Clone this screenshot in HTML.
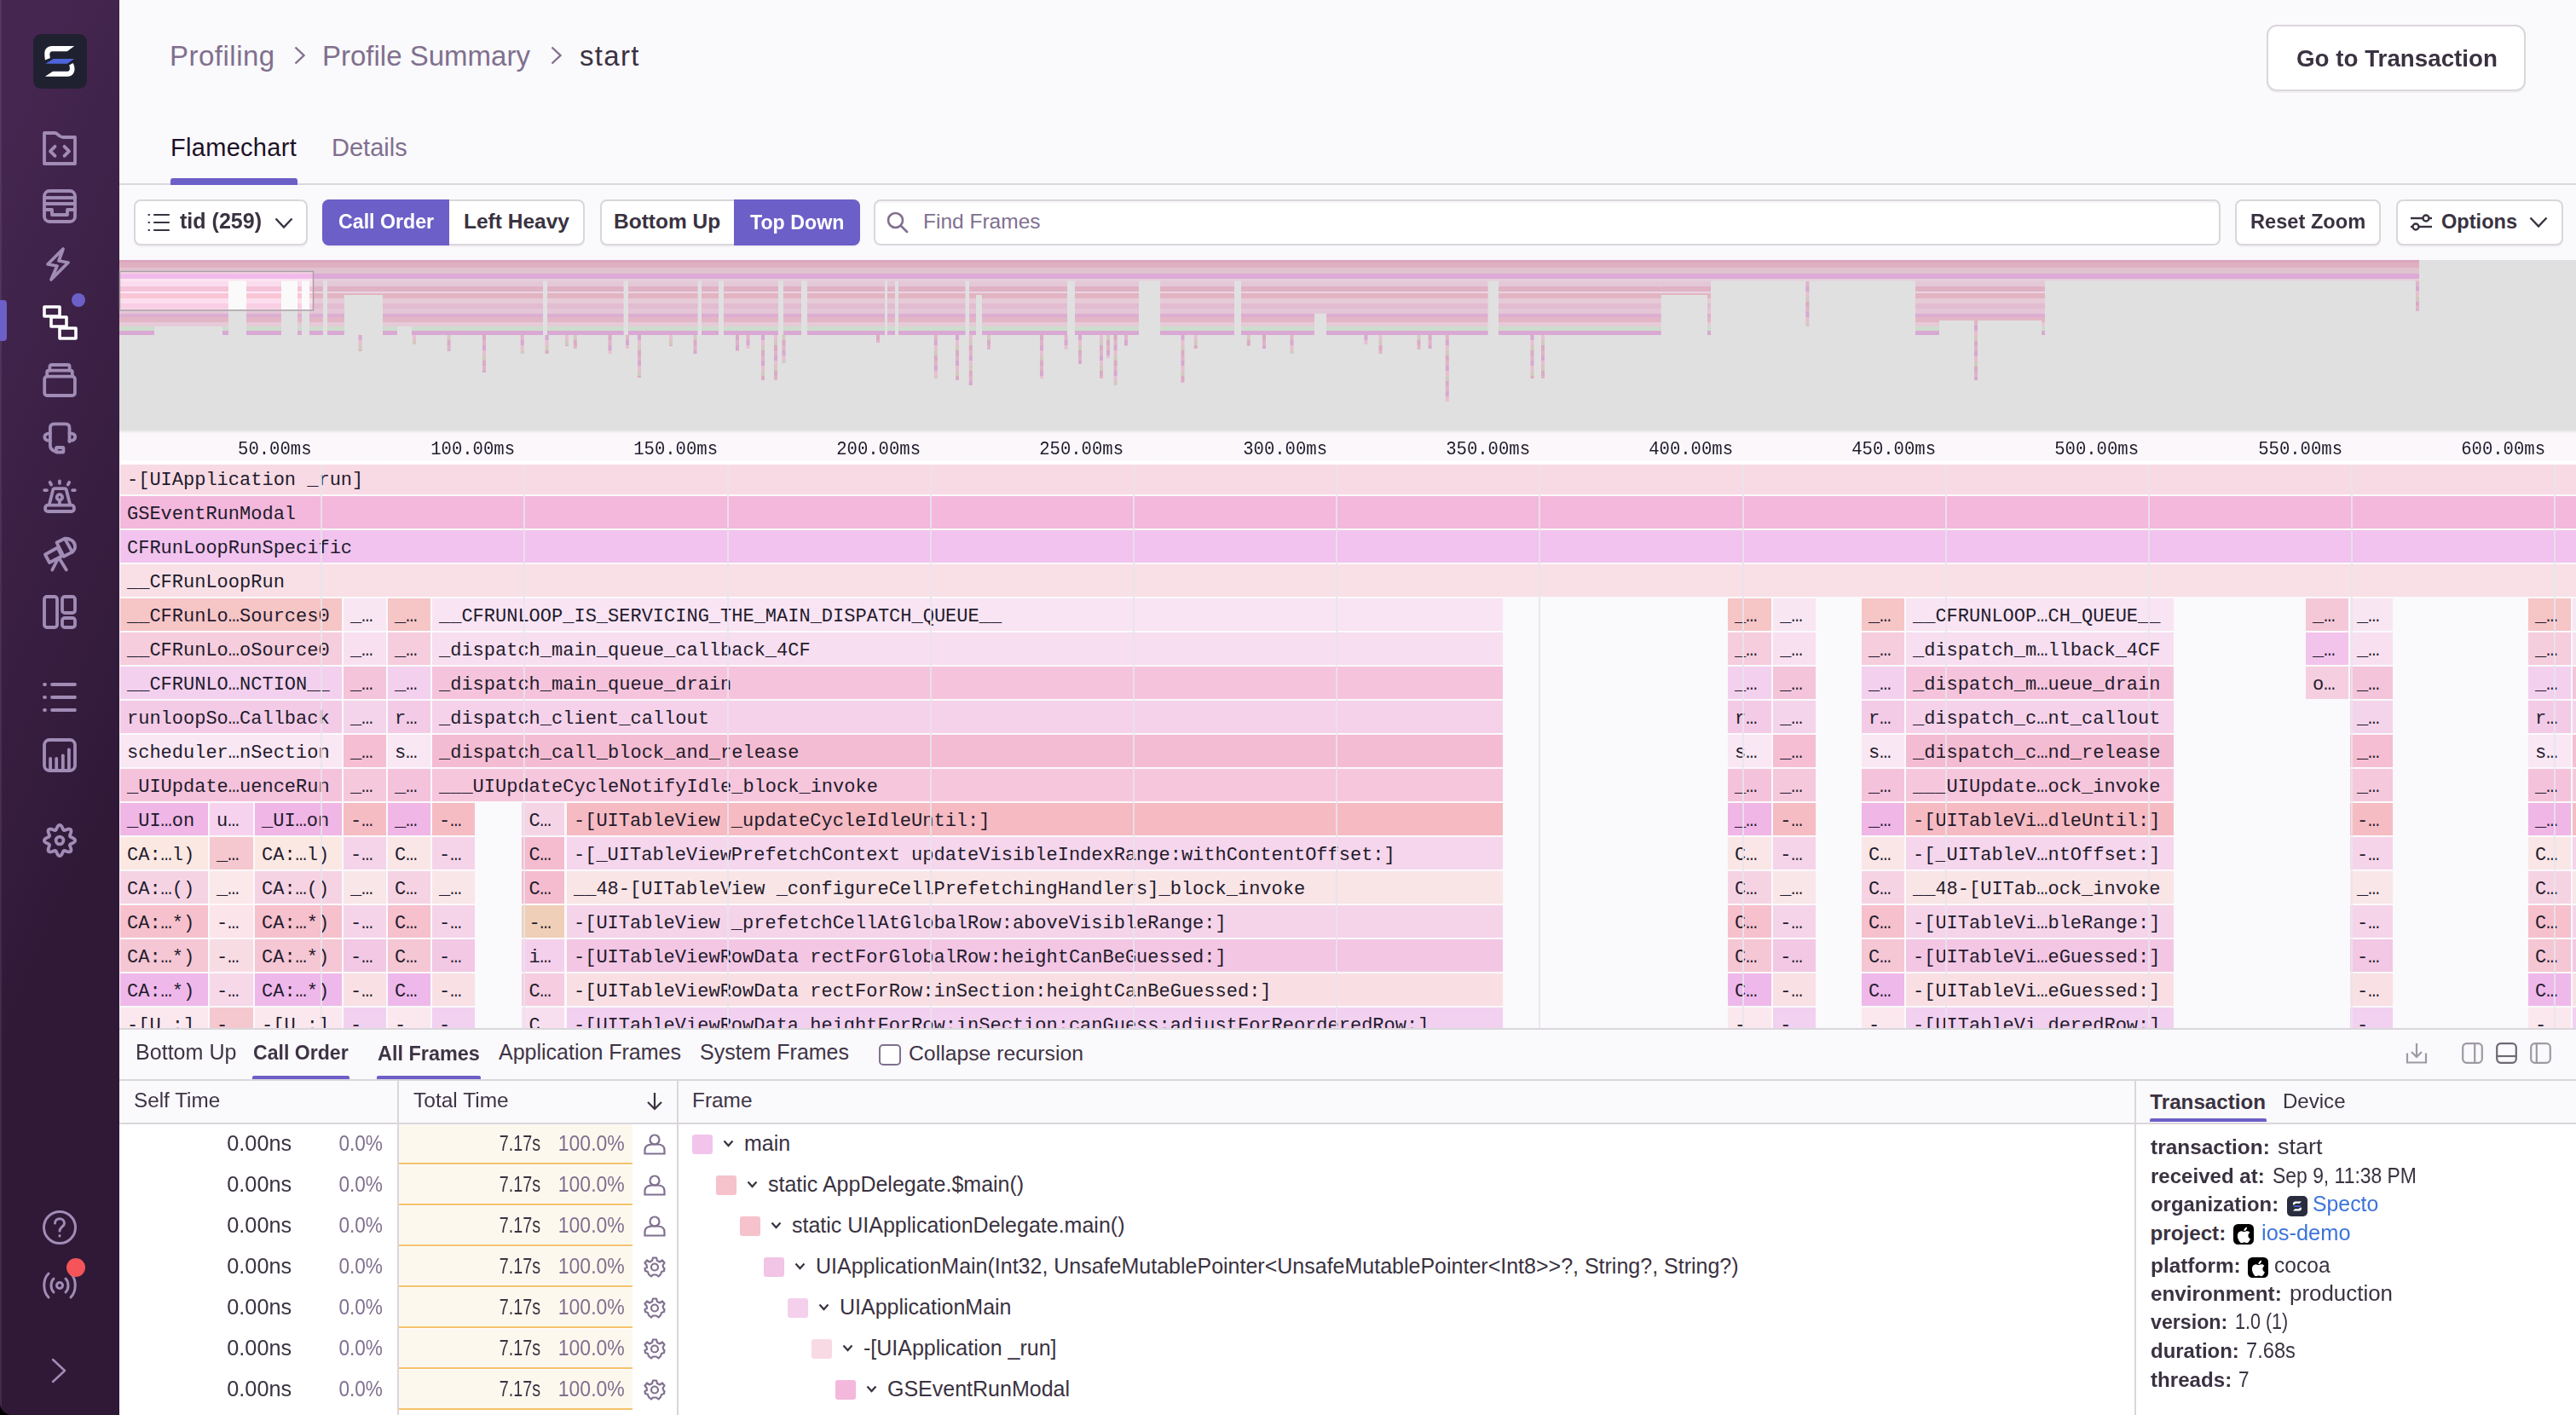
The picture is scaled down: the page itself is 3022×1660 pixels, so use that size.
<!DOCTYPE html><html><head><meta charset="utf-8"><style>
html,body{margin:0;padding:0;width:100%;height:100%;overflow:hidden;background:#faf9fb;}
body{position:relative;font-family:"Liberation Sans", sans-serif;}
.t{position:absolute;white-space:nowrap;line-height:1.1172;}
.m{position:absolute;white-space:nowrap;line-height:1.1328;font-family:"Liberation Mono", monospace;}
.b{position:absolute;box-sizing:border-box;}
svg{position:absolute;overflow:visible;}
#root{position:absolute;left:0;top:0;width:3022px;height:1660px;overflow:hidden;transform-origin:0 0;}
</style></head><body><div id="root">
<div class="b" style="left:0;top:0;width:140px;height:1660px;background:linear-gradient(294.17deg,#2f1937 35.57%,#452650 92.42%);"></div>
<div class="b" style="left:0;top:0;width:2px;height:1660px;background:rgba(255,255,255,0.08);"></div>
<div class="b" style="left:38.5px;top:40px;width:63.5px;height:64px;border-radius:9px;background:#1f2130;"></div>
<svg style="left:0;top:0" width="140" height="140" viewBox="0 0 140 140">
<path d="M87.2 54.1 L61 54.1 C55.5 54.1 52.3 58.2 52.3 62.5 C52.3 66 52.6 68.8 53 70.6 L58.9 68.1 C58.5 66.6 58.3 65 58.3 63.6 C58.3 61.6 59.5 60.2 61.3 60.2 L78.8 60.2 Z" fill="#fff"/>
<path d="M52.8 89.7 L79.3 89.7 C84.6 89.7 87.5 85.6 87.5 81 C87.5 77.5 86.6 75.5 85.4 73.9 L81.2 76.4 C81.7 77.6 81.9 79 81.9 80.2 C81.9 82.3 80.9 83.8 79.1 83.8 L62 83.8 Z" fill="#fff"/>
<path d="M53.3 74.7 L62.7 69.1 L87.2 69.1 L78.8 74.7 Z" fill="#4e64d8"/>
</svg>
<svg style="left:50px;top:154px" width="40" height="40" viewBox="0 0 40 40"><g fill="none" stroke="#a08cb5" stroke-width="3.8" stroke-linecap="round" stroke-linejoin="round"><path d="M2 2 L14.5 2 C16.5 2 17.5 4 20 5.5 C21.5 6.5 22.5 7 24 7 L38 7 L38 38 L2 38 Z"/><path d="M14.5 17.8 L9 23.3 L14.5 28.8"/><path d="M25.5 17.8 L31 23.3 L25.5 28.8"/></g></svg>
<svg style="left:50px;top:221.5px" width="40" height="40" viewBox="0 0 40 40"><g fill="none" stroke="#a08cb5" stroke-width="3.8" stroke-linecap="round" stroke-linejoin="round"><rect x="2" y="2" width="36" height="36" rx="6"/><path d="M2 10 L38 10"/><path d="M2 17 L38 17"/><path d="M2 24 L11 24 L11 30 L29 30 L29 24 L38 24"/></g></svg>
<svg style="left:50px;top:290px" width="40" height="40" viewBox="0 0 40 40"><g fill="none" stroke="#a08cb5" stroke-width="3.8" stroke-linecap="round" stroke-linejoin="round"><path d="M24 2 L6 20 L17 22 L10 38 L30 18 L19 16 Z"/></g></svg>
<svg style="left:50px;top:358px" width="41" height="41" viewBox="0 0 41 41"><g fill="none" stroke="#fff" stroke-width="3.6" stroke-linejoin="round"><rect x="2" y="2" width="18" height="11"/><rect x="10" y="14" width="18" height="11"/><rect x="20" y="27" width="19" height="12"/></g></svg>
<div class="b" style="left:84px;top:343.5px;width:16px;height:16px;border-radius:8px;background:#6c5fc7;"></div>
<div class="b" style="left:0;top:352px;width:8px;height:48px;border-radius:0 4px 4px 0;background:#6c5fc7;"></div>
<svg style="left:50px;top:426px" width="40" height="40" viewBox="0 0 40 40"><g fill="none" stroke="#a08cb5" stroke-width="3.8" stroke-linecap="round" stroke-linejoin="round"><rect x="2.2" y="15.6" width="35.7" height="22.4" rx="3"/><path d="M5.2 15.6 L5.2 10.5 C5.2 9.5 6 8.7 7 8.7 L33 8.7 C34 8.7 34.8 9.5 34.8 10.5 L34.8 15.6"/><path d="M8.4 8.7 L8.4 4 C8.4 2.9 9.3 2 10.4 2 L29.6 2 C30.7 2 31.6 2.9 31.6 4 L31.6 8.7"/></g></svg>
<svg style="left:50px;top:494px" width="40" height="40" viewBox="0 0 40 40"><g fill="none" stroke="#a08cb5" stroke-width="3.8" stroke-linecap="round" stroke-linejoin="round"><path d="M31.5 24 L31.5 8 C31.5 5 30 3.4 27 3.4 L13.5 3.4 C10.5 3.4 8.9 5 8.9 8 L8.9 29 C8.9 32 11 34 14.5 35.5"/><path d="M8.9 14.4 C4 14.4 2.3 16.5 2.3 18.7 C2.3 21 4 22.9 8.9 22.9"/><path d="M31.5 14.4 C36.5 14.4 38.2 16.5 38.2 18.7 C38.2 21 36.5 22.9 31.5 22.9"/><rect x="15.9" y="31" width="8.5" height="5.5" rx="1"/></g></svg>
<svg style="left:50px;top:562px" width="40" height="40" viewBox="0 0 40 40"><g fill="none" stroke="#a08cb5" stroke-width="3.8" stroke-linecap="round" stroke-linejoin="round"><path d="M7.8 30 L12.2 12.6 C12.5 11.6 13.3 11.1 14.3 11.1 L25.7 11.1 C26.7 11.1 27.5 11.6 27.8 12.6 L32.2 30"/><rect x="3.1" y="30.7" width="33.8" height="7.3" rx="3"/><circle cx="19.9" cy="21.4" r="3.2"/><path d="M19.9 24.6 L19.9 30"/><path d="M19.9 2.3 L19.9 4.9"/><path d="M8.6 3.8 L10.1 6.5"/><path d="M31.2 3.8 L29.7 6.5"/><path d="M2.2 13.1 L4.9 13.1"/><path d="M35.1 13.1 L37.8 13.1"/></g></svg>
<svg style="left:50px;top:630px" width="40" height="40" viewBox="0 0 40 40"><g fill="none" stroke="#a08cb5" stroke-width="3.8" stroke-linecap="round" stroke-linejoin="round"><path d="M3 20.5 L17.5 12.5 L22.5 22.5 L8 30 Z"/><path d="M16.5 6.5 L26 1.8 L34.8 17.6 L24.8 22.8 Z"/><path d="M26 1.8 C31 1.5 37.5 4.5 38 10 C38.3 13 37 16 34.8 17.6"/><path d="M17.5 26.5 L11.3 38.5"/><path d="M19.8 25.5 L27.8 38.5"/></g></svg>
<svg style="left:50px;top:698px" width="40" height="40" viewBox="0 0 40 40"><g fill="none" stroke="#a08cb5" stroke-width="3.8" stroke-linecap="round" stroke-linejoin="round"><rect x="2" y="2" width="15" height="36" rx="3"/><rect x="23" y="2" width="15" height="19" rx="3"/><rect x="23" y="27" width="15" height="11" rx="3"/></g></svg>
<svg style="left:50px;top:800px" width="40" height="40" viewBox="0 0 40 40"><g fill="none" stroke="#a08cb5" stroke-width="3.8" stroke-linecap="round" stroke-linejoin="round"><path d="M11 3 L38 3"/><path d="M11 18 L38 18"/><path d="M11 33 L38 33"/><path d="M2 3 L3 3"/><path d="M2 18 L3 18"/><path d="M2 33 L3 33"/></g></svg>
<svg style="left:50px;top:866px" width="40" height="40" viewBox="0 0 40 40"><g fill="none" stroke="#a08cb5" stroke-width="3.8" stroke-linecap="round" stroke-linejoin="round"><rect x="2" y="2" width="36" height="36" rx="6"/><path d="M9.1 37 L9.1 24"/><path d="M16.2 37 L16.2 24"/><path d="M23.8 37 L23.8 20.3"/><path d="M30.9 37 L30.9 13.3"/></g></svg>
<svg style="left:50px;top:966px" width="40" height="40" viewBox="0 0 40 40"><g fill="none" stroke="#a08cb5" stroke-width="3.8" stroke-linecap="round" stroke-linejoin="round"><circle cx="20" cy="20" r="4.4"/><path d="M38.20 20.00 L37.81 21.17 L36.76 22.21 L35.30 23.04 L33.81 23.70 L32.64 24.29 L32.01 24.97 L31.97 25.90 L32.38 27.15 L32.97 28.67 L33.41 30.29 L33.42 31.77 L32.87 32.87 L31.77 33.42 L30.29 33.41 L28.67 32.97 L27.15 32.38 L25.90 31.97 L24.97 32.01 L24.29 32.64 L23.70 33.81 L23.04 35.30 L22.21 36.76 L21.17 37.81 L20.00 38.20 L18.83 37.81 L17.79 36.76 L16.96 35.30 L16.30 33.81 L15.71 32.64 L15.03 32.01 L14.10 31.97 L12.85 32.38 L11.33 32.97 L9.71 33.41 L8.23 33.42 L7.13 32.87 L6.58 31.77 L6.59 30.29 L7.03 28.67 L7.62 27.15 L8.03 25.90 L7.99 24.97 L7.36 24.29 L6.19 23.70 L4.70 23.04 L3.24 22.21 L2.19 21.17 L1.80 20.00 L2.19 18.83 L3.24 17.79 L4.70 16.96 L6.19 16.30 L7.36 15.71 L7.99 15.03 L8.03 14.10 L7.62 12.85 L7.03 11.33 L6.59 9.71 L6.58 8.23 L7.13 7.13 L8.23 6.58 L9.71 6.59 L11.33 7.03 L12.85 7.62 L14.10 8.03 L15.03 7.99 L15.71 7.36 L16.30 6.19 L16.96 4.70 L17.79 3.24 L18.83 2.19 L20.00 1.80 L21.17 2.19 L22.21 3.24 L23.04 4.70 L23.70 6.19 L24.29 7.36 L24.97 7.99 L25.90 8.03 L27.15 7.62 L28.67 7.03 L30.29 6.59 L31.77 6.58 L32.87 7.13 L33.42 8.23 L33.41 9.71 L32.97 11.33 L32.38 12.85 L31.97 14.10 L32.01 15.03 L32.64 15.71 L33.81 16.30 L35.30 16.96 L36.76 17.79 L37.81 18.83 L38.20 20.00 Z"/></g></svg>
<svg style="left:50px;top:1420px" width="40" height="40" viewBox="0 0 40 40"><g fill="none" stroke="#a08cb5" stroke-width="3" stroke-linecap="round" stroke-linejoin="round"><circle cx="20" cy="20" r="18.5"/><path d="M14.5 15 C14.5 8 25.5 8 25.5 15 C25.5 19 20 19.5 20 24"/><path d="M20 29.5 L20 30"/></g></svg>
<svg style="left:50px;top:1488px" width="40" height="40" viewBox="0 0 40 40"><g fill="none" stroke="#a08cb5" stroke-width="3" stroke-linecap="round" stroke-linejoin="round"><circle cx="20" cy="20" r="3.5"/><path d="M13 12 C9 16 9 24 13 28"/><path d="M27 12 C31 16 31 24 27 28"/><path d="M7 6 C0 13 0 27 7 34"/><path d="M33 6 C40 13 40 27 33 34"/></g></svg>
<div class="b" style="left:78px;top:1476px;width:22px;height:22px;border-radius:11px;background:#f55459;"></div>
<svg style="left:50px;top:1588px" width="40" height="40" viewBox="0 0 40 40"><g fill="none" stroke="#a08cb5" stroke-width="2.5" stroke-linecap="round" stroke-linejoin="round"><path d="M-8 -13 L6 0 L-8 13" transform="translate(20,20)"/></g></svg>
<div class="b" style="left:0;top:1646px;width:14px;height:14px;background:radial-gradient(circle at 14px 0px, transparent 13.5px, #000 14.5px);"></div>
<div class="b" style="left:3008px;top:1646px;width:14px;height:14px;background:radial-gradient(circle at 0px 0px, transparent 13.5px, #000 14.5px);"></div>
<div class="t" style="left:199px;top:47.8px;font-size:33px;color:#80708f;font-weight:400;letter-spacing:0.5px;">Profiling</div>
<svg style="left:345px;top:54px" width="13" height="22" viewBox="0 0 13 22"><path d="M1.5 1.5 L11.5 11 L1.5 20.5" fill="none" stroke="#80708f" stroke-width="2.4"/></svg>
<div class="t" style="left:378px;top:47.8px;font-size:33px;color:#80708f;font-weight:400;">Profile Summary</div>
<svg style="left:646px;top:54px" width="13" height="22" viewBox="0 0 13 22"><path d="M1.5 1.5 L11.5 11 L1.5 20.5" fill="none" stroke="#80708f" stroke-width="2.4"/></svg>
<div class="t" style="left:680px;top:47.8px;font-size:33px;color:#3a3241;font-weight:400;letter-spacing:1.3px;">start</div>
<div class="b" style="left:2659px;top:29px;width:304px;height:78px;border:2px solid #dad6dc;border-radius:12px;background:#fff;box-shadow:0 2px 0 rgba(43,34,51,0.04);"></div>
<div class="t" style="left:2693.5px;top:53.0px;font-size:28px;color:#3a3241;font-weight:700;transform:scaleX(0.9912);transform-origin:0 50%;">Go to Transaction</div>
<div class="t" style="left:200px;top:156.7px;font-size:29px;color:#1d1127;font-weight:400;letter-spacing:0.3px;">Flamechart</div>
<div class="t" style="left:389px;top:156.7px;font-size:29px;color:#80708f;font-weight:400;">Details</div>
<div class="b" style="left:140px;top:215px;width:2882px;height:2px;background:#dad6dc;"></div>
<div class="b" style="left:200px;top:209px;width:149px;height:8px;background:#6c5fc7;border-radius:3px 3px 0 0;"></div>
<div class="b" style="left:157px;top:233.5px;width:204px;height:54.5px;background:#fff;border:2px solid #dad6dc;border-radius:8px;box-shadow:0 2px 0 rgba(43,34,51,0.04);"></div>
<svg style="left:173px;top:249px" width="26" height="24" viewBox="0 0 26 24"><g stroke="#3a3241" stroke-width="2.2" fill="none" stroke-linecap="round"><path d="M8 3 L25 3"/><path d="M8 12 L25 12"/><path d="M8 21 L25 21"/><path d="M1.5 3 L2 3"/><path d="M1.5 12 L2 12"/><path d="M1.5 21 L2 21"/></g></svg>
<div class="t" style="left:211px;top:245.8px;font-size:25px;color:#3a3241;font-weight:700;transform:scaleX(1.0026);transform-origin:0 50%;">tid (259)</div>
<svg style="left:322px;top:255px" width="22" height="14" viewBox="0 0 22 14"><path d="M1.5 1.5 L11 11.5 L20.5 1.5" fill="none" stroke="#3a3241" stroke-width="2.4"/></svg>
<div class="b" style="left:378px;top:233.5px;width:308px;height:54.5px;background:#fff;border:2px solid #dad6dc;border-radius:8px;box-shadow:0 2px 0 rgba(43,34,51,0.04);"></div>
<div class="b" style="left:378px;top:233.5px;width:149px;height:54.5px;background:#6c5fc7;border-radius:8px 0 0 8px;"></div>
<div class="t" style="left:396.7px;top:246.7px;font-size:24px;color:#fff;font-weight:700;transform:scaleX(0.9664);transform-origin:0 50%;">Call Order</div>
<div class="t" style="left:544px;top:246.2px;font-size:24.5px;color:#3a3241;font-weight:700;transform:scaleX(1.0000);transform-origin:0 50%;">Left Heavy</div>
<div class="b" style="left:704px;top:233.5px;width:305px;height:54.5px;background:#fff;border:2px solid #dad6dc;border-radius:8px;box-shadow:0 2px 0 rgba(43,34,51,0.04);"></div>
<div class="b" style="left:861px;top:233.5px;width:148px;height:54.5px;background:#6c5fc7;border-radius:0 8px 8px 0;"></div>
<div class="t" style="left:720px;top:246.2px;font-size:24.5px;color:#3a3241;font-weight:700;">Bottom Up</div>
<div class="t" style="left:879.8px;top:246.5px;font-size:24.2px;color:#fff;font-weight:700;transform:scaleX(0.9593);transform-origin:0 50%;">Top Down</div>
<div class="b" style="left:1025px;top:233.5px;width:1580px;height:54.5px;background:#fff;border:2px solid #dad6dc;border-radius:8px;box-shadow:inset 0 2px 1px rgba(43,34,51,0.04);"></div>
<svg style="left:1040px;top:248px" width="26" height="26" viewBox="0 0 26 26"><g stroke="#80708f" stroke-width="2.6" fill="none" stroke-linecap="round"><circle cx="10.5" cy="10.5" r="8.5"/><path d="M17 17 L24 24"/></g></svg>
<div class="t" style="left:1083px;top:246.2px;font-size:24.5px;color:#80708f;font-weight:400;">Find Frames</div>
<div class="b" style="left:2622px;top:233.5px;width:171px;height:54.5px;background:#fff;border:2px solid #dad6dc;border-radius:8px;box-shadow:0 2px 0 rgba(43,34,51,0.04);"></div>
<div class="t" style="left:2640px;top:246.9px;font-size:23.8px;color:#3a3241;font-weight:700;transform:scaleX(0.9926);transform-origin:0 50%;">Reset Zoom</div>
<div class="b" style="left:2811px;top:233.5px;width:196px;height:54.5px;background:#fff;border:2px solid #dad6dc;border-radius:8px;box-shadow:0 2px 0 rgba(43,34,51,0.04);"></div>
<svg style="left:2827px;top:250px" width="27" height="22" viewBox="0 0 27 22"><g stroke="#3a3241" stroke-width="2.4" fill="none"><path d="M1 6 L15 6"/><circle cx="19" cy="6" r="3.5"/><path d="M22.5 6 L26 6"/><path d="M11 16 L26 16"/><circle cx="7" cy="16" r="3.5"/><path d="M1 16 L3.5 16"/></g></svg>
<div class="t" style="left:2864px;top:247.0px;font-size:23.6px;color:#3a3241;font-weight:700;">Options</div>
<svg style="left:2967px;top:254px" width="22" height="14" viewBox="0 0 22 14"><path d="M1.5 1.5 L11 11.5 L20.5 1.5" fill="none" stroke="#3a3241" stroke-width="2.4"/></svg>
<svg style="left:0;top:0" width="3022" height="1660" viewBox="0 0 3022 1660"><rect x="140" y="305" width="2882" height="200.5" fill="#e0e0e0"/><rect x="140" y="305" width="2698" height="3" fill="#dca6c0"/><rect x="140" y="308" width="2698" height="6" fill="#dfb0c0"/><rect x="140" y="314" width="2698" height="7" fill="#e1c2cf"/><rect x="140" y="321" width="2698" height="6" fill="#dcaad6"/><rect x="140" y="327" width="2698" height="2.5" fill="#e4cfdb"/><rect x="140" y="329.5" width="41" height="6.5" fill="#e4c8d8"/><rect x="140" y="336" width="41" height="6" fill="#dfb2c4"/><rect x="140" y="342" width="41" height="2" fill="#ead4e2"/><rect x="140" y="344" width="41" height="6" fill="#e2b4c2"/><rect x="140" y="350" width="41" height="6" fill="#e6cad8"/><rect x="140" y="356" width="41" height="6" fill="#e2bcd0"/><rect x="140" y="362" width="41" height="6" fill="#e4c6d6"/><rect x="140" y="368" width="41" height="4" fill="#dcaed2"/><rect x="140" y="372" width="41" height="6" fill="#e2b6c6"/><rect x="140" y="378" width="41" height="5" fill="#e6cad8"/><rect x="140" y="383" width="41" height="5" fill="#cddccc"/><rect x="140" y="388" width="41" height="5" fill="#daa8d4"/><rect x="181" y="329.5" width="80" height="6.5" fill="#e4c8d8"/><rect x="181" y="336" width="80" height="6" fill="#dfb2c4"/><rect x="181" y="342" width="80" height="2" fill="#ead4e2"/><rect x="181" y="344" width="80" height="6" fill="#e2b4c2"/><rect x="181" y="350" width="80" height="6" fill="#e6cad8"/><rect x="181" y="356" width="80" height="6" fill="#e2bcd0"/><rect x="181" y="362" width="80" height="6" fill="#e4c6d6"/><rect x="181" y="368" width="80" height="4" fill="#dcaed2"/><rect x="181" y="372" width="80" height="6" fill="#e2b6c6"/><rect x="181" y="378" width="80" height="5" fill="#e6cad8"/><rect x="261" y="329.5" width="7" height="6.5" fill="#e4c8d8"/><rect x="261" y="336" width="7" height="6" fill="#dfb2c4"/><rect x="261" y="342" width="7" height="2" fill="#ead4e2"/><rect x="261" y="344" width="7" height="6" fill="#e2b4c2"/><rect x="261" y="350" width="7" height="6" fill="#e6cad8"/><rect x="261" y="356" width="7" height="6" fill="#e2bcd0"/><rect x="261" y="362" width="7" height="6" fill="#e4c6d6"/><rect x="261" y="368" width="7" height="4" fill="#dcaed2"/><rect x="261" y="372" width="7" height="6" fill="#e2b6c6"/><rect x="261" y="378" width="7" height="5" fill="#e6cad8"/><rect x="261" y="383" width="7" height="5" fill="#cddccc"/><rect x="261" y="388" width="7" height="5" fill="#daa8d4"/><rect x="289" y="329.5" width="41" height="6.5" fill="#e4c8d8"/><rect x="289" y="336" width="41" height="6" fill="#dfb2c4"/><rect x="289" y="342" width="41" height="2" fill="#ead4e2"/><rect x="289" y="344" width="41" height="6" fill="#e2b4c2"/><rect x="289" y="350" width="41" height="6" fill="#e6cad8"/><rect x="289" y="356" width="41" height="6" fill="#e2bcd0"/><rect x="289" y="362" width="41" height="6" fill="#e4c6d6"/><rect x="289" y="368" width="41" height="4" fill="#dcaed2"/><rect x="289" y="372" width="41" height="6" fill="#e2b6c6"/><rect x="289" y="378" width="41" height="5" fill="#e6cad8"/><rect x="289" y="383" width="41" height="5" fill="#cddccc"/><rect x="289" y="388" width="41" height="5" fill="#daa8d4"/><rect x="349" y="329.5" width="5" height="6.5" fill="#e4c8d8"/><rect x="349" y="336" width="5" height="6" fill="#dfb2c4"/><rect x="349" y="342" width="5" height="2" fill="#ead4e2"/><rect x="349" y="344" width="5" height="6" fill="#e2b4c2"/><rect x="349" y="350" width="5" height="6" fill="#e6cad8"/><rect x="349" y="356" width="5" height="6" fill="#e2bcd0"/><rect x="349" y="362" width="5" height="6" fill="#e4c6d6"/><rect x="349" y="368" width="5" height="4" fill="#dcaed2"/><rect x="349" y="372" width="5" height="6" fill="#e2b6c6"/><rect x="349" y="378" width="5" height="5" fill="#e6cad8"/><rect x="349" y="383" width="5" height="5" fill="#cddccc"/><rect x="349" y="388" width="5" height="5" fill="#daa8d4"/><rect x="363" y="329.5" width="16" height="6.5" fill="#e4c8d8"/><rect x="363" y="336" width="16" height="6" fill="#dfb2c4"/><rect x="363" y="342" width="16" height="2" fill="#ead4e2"/><rect x="363" y="344" width="16" height="6" fill="#e2b4c2"/><rect x="363" y="350" width="16" height="6" fill="#e6cad8"/><rect x="363" y="356" width="16" height="6" fill="#e2bcd0"/><rect x="363" y="362" width="16" height="6" fill="#e4c6d6"/><rect x="363" y="368" width="16" height="4" fill="#dcaed2"/><rect x="363" y="372" width="16" height="6" fill="#e2b6c6"/><rect x="363" y="378" width="16" height="5" fill="#e6cad8"/><rect x="363" y="383" width="16" height="5" fill="#cddccc"/><rect x="363" y="388" width="16" height="5" fill="#daa8d4"/><rect x="384" y="329.5" width="20" height="6.5" fill="#e4c8d8"/><rect x="384" y="336" width="20" height="6" fill="#dfb2c4"/><rect x="384" y="342" width="20" height="2" fill="#ead4e2"/><rect x="384" y="344" width="20" height="6" fill="#e2b4c2"/><rect x="384" y="350" width="20" height="6" fill="#e6cad8"/><rect x="384" y="356" width="20" height="6" fill="#e2bcd0"/><rect x="384" y="362" width="20" height="6" fill="#e4c6d6"/><rect x="384" y="368" width="20" height="4" fill="#dcaed2"/><rect x="384" y="372" width="20" height="6" fill="#e2b6c6"/><rect x="384" y="378" width="20" height="5" fill="#e6cad8"/><rect x="384" y="383" width="20" height="5" fill="#cddccc"/><rect x="384" y="388" width="20" height="5" fill="#daa8d4"/><rect x="404" y="329.5" width="45" height="6.5" fill="#e4c8d8"/><rect x="404" y="336" width="45" height="6" fill="#dfb2c4"/><rect x="404" y="342" width="45" height="2" fill="#ead4e2"/><rect x="404" y="344" width="45" height="2" fill="#e2b4c2"/><rect x="449" y="329.5" width="17" height="6.5" fill="#e4c8d8"/><rect x="449" y="336" width="17" height="6" fill="#dfb2c4"/><rect x="449" y="342" width="17" height="2" fill="#ead4e2"/><rect x="449" y="344" width="17" height="6" fill="#e2b4c2"/><rect x="449" y="350" width="17" height="6" fill="#e6cad8"/><rect x="449" y="356" width="17" height="6" fill="#e2bcd0"/><rect x="449" y="362" width="17" height="6" fill="#e4c6d6"/><rect x="449" y="368" width="17" height="4" fill="#dcaed2"/><rect x="449" y="372" width="17" height="6" fill="#e2b6c6"/><rect x="449" y="378" width="17" height="5" fill="#e6cad8"/><rect x="449" y="383" width="17" height="5" fill="#cddccc"/><rect x="449" y="388" width="17" height="5" fill="#daa8d4"/><rect x="466" y="329.5" width="17" height="6.5" fill="#e4c8d8"/><rect x="466" y="336" width="17" height="6" fill="#dfb2c4"/><rect x="466" y="342" width="17" height="2" fill="#ead4e2"/><rect x="466" y="344" width="17" height="6" fill="#e2b4c2"/><rect x="466" y="350" width="17" height="6" fill="#e6cad8"/><rect x="466" y="356" width="17" height="6" fill="#e2bcd0"/><rect x="466" y="362" width="17" height="6" fill="#e4c6d6"/><rect x="466" y="368" width="17" height="4" fill="#dcaed2"/><rect x="466" y="372" width="17" height="6" fill="#e2b6c6"/><rect x="466" y="378" width="17" height="5" fill="#e6cad8"/><rect x="483" y="329.5" width="154" height="6.5" fill="#e4c8d8"/><rect x="483" y="336" width="154" height="6" fill="#dfb2c4"/><rect x="483" y="342" width="154" height="2" fill="#ead4e2"/><rect x="483" y="344" width="154" height="6" fill="#e2b4c2"/><rect x="483" y="350" width="154" height="6" fill="#e6cad8"/><rect x="483" y="356" width="154" height="6" fill="#e2bcd0"/><rect x="483" y="362" width="154" height="6" fill="#e4c6d6"/><rect x="483" y="368" width="154" height="4" fill="#dcaed2"/><rect x="483" y="372" width="154" height="6" fill="#e2b6c6"/><rect x="483" y="378" width="154" height="5" fill="#e6cad8"/><rect x="483" y="383" width="154" height="5" fill="#cddccc"/><rect x="483" y="388" width="154" height="5" fill="#daa8d4"/><rect x="642" y="329.5" width="89.60000000000002" height="6.5" fill="#e4c8d8"/><rect x="642" y="336" width="89.60000000000002" height="6" fill="#dfb2c4"/><rect x="642" y="342" width="89.60000000000002" height="2" fill="#ead4e2"/><rect x="642" y="344" width="89.60000000000002" height="6" fill="#e2b4c2"/><rect x="642" y="350" width="89.60000000000002" height="6" fill="#e6cad8"/><rect x="642" y="356" width="89.60000000000002" height="6" fill="#e2bcd0"/><rect x="642" y="362" width="89.60000000000002" height="6" fill="#e4c6d6"/><rect x="642" y="368" width="89.60000000000002" height="4" fill="#dcaed2"/><rect x="642" y="372" width="89.60000000000002" height="6" fill="#e2b6c6"/><rect x="642" y="378" width="89.60000000000002" height="5" fill="#e6cad8"/><rect x="642" y="383" width="89.60000000000002" height="5" fill="#cddccc"/><rect x="642" y="388" width="89.60000000000002" height="5" fill="#daa8d4"/><rect x="737" y="329.5" width="81.60000000000002" height="6.5" fill="#e4c8d8"/><rect x="737" y="336" width="81.60000000000002" height="6" fill="#dfb2c4"/><rect x="737" y="342" width="81.60000000000002" height="2" fill="#ead4e2"/><rect x="737" y="344" width="81.60000000000002" height="6" fill="#e2b4c2"/><rect x="737" y="350" width="81.60000000000002" height="6" fill="#e6cad8"/><rect x="737" y="356" width="81.60000000000002" height="6" fill="#e2bcd0"/><rect x="737" y="362" width="81.60000000000002" height="6" fill="#e4c6d6"/><rect x="737" y="368" width="81.60000000000002" height="4" fill="#dcaed2"/><rect x="737" y="372" width="81.60000000000002" height="6" fill="#e2b6c6"/><rect x="737" y="378" width="81.60000000000002" height="5" fill="#e6cad8"/><rect x="737" y="383" width="81.60000000000002" height="5" fill="#cddccc"/><rect x="737" y="388" width="81.60000000000002" height="5" fill="#daa8d4"/><rect x="823" y="329.5" width="20" height="6.5" fill="#e4c8d8"/><rect x="823" y="336" width="20" height="6" fill="#dfb2c4"/><rect x="823" y="342" width="20" height="2" fill="#ead4e2"/><rect x="823" y="344" width="20" height="6" fill="#e2b4c2"/><rect x="823" y="350" width="20" height="6" fill="#e6cad8"/><rect x="823" y="356" width="20" height="6" fill="#e2bcd0"/><rect x="823" y="362" width="20" height="6" fill="#e4c6d6"/><rect x="823" y="368" width="20" height="4" fill="#dcaed2"/><rect x="823" y="372" width="20" height="6" fill="#e2b6c6"/><rect x="823" y="378" width="20" height="5" fill="#e6cad8"/><rect x="823" y="383" width="20" height="5" fill="#cddccc"/><rect x="823" y="388" width="20" height="5" fill="#daa8d4"/><rect x="849" y="329.5" width="64" height="6.5" fill="#e4c8d8"/><rect x="849" y="336" width="64" height="6" fill="#dfb2c4"/><rect x="849" y="342" width="64" height="2" fill="#ead4e2"/><rect x="849" y="344" width="64" height="6" fill="#e2b4c2"/><rect x="849" y="350" width="64" height="6" fill="#e6cad8"/><rect x="849" y="356" width="64" height="6" fill="#e2bcd0"/><rect x="849" y="362" width="64" height="6" fill="#e4c6d6"/><rect x="849" y="368" width="64" height="4" fill="#dcaed2"/><rect x="849" y="372" width="64" height="6" fill="#e2b6c6"/><rect x="849" y="378" width="64" height="5" fill="#e6cad8"/><rect x="849" y="383" width="64" height="5" fill="#cddccc"/><rect x="849" y="388" width="64" height="5" fill="#daa8d4"/><rect x="919" y="329.5" width="21" height="6.5" fill="#e4c8d8"/><rect x="919" y="336" width="21" height="6" fill="#dfb2c4"/><rect x="919" y="342" width="21" height="2" fill="#ead4e2"/><rect x="919" y="344" width="21" height="6" fill="#e2b4c2"/><rect x="919" y="350" width="21" height="6" fill="#e6cad8"/><rect x="919" y="356" width="21" height="6" fill="#e2bcd0"/><rect x="919" y="362" width="21" height="6" fill="#e4c6d6"/><rect x="919" y="368" width="21" height="4" fill="#dcaed2"/><rect x="919" y="372" width="21" height="6" fill="#e2b6c6"/><rect x="919" y="378" width="21" height="5" fill="#e6cad8"/><rect x="919" y="383" width="21" height="5" fill="#cddccc"/><rect x="919" y="388" width="21" height="5" fill="#daa8d4"/><rect x="947" y="329.5" width="91" height="6.5" fill="#e4c8d8"/><rect x="947" y="336" width="91" height="6" fill="#dfb2c4"/><rect x="947" y="342" width="91" height="2" fill="#ead4e2"/><rect x="947" y="344" width="91" height="6" fill="#e2b4c2"/><rect x="947" y="350" width="91" height="6" fill="#e6cad8"/><rect x="947" y="356" width="91" height="6" fill="#e2bcd0"/><rect x="947" y="362" width="91" height="6" fill="#e4c6d6"/><rect x="947" y="368" width="91" height="4" fill="#dcaed2"/><rect x="947" y="372" width="91" height="6" fill="#e2b6c6"/><rect x="947" y="378" width="91" height="5" fill="#e6cad8"/><rect x="947" y="383" width="91" height="5" fill="#cddccc"/><rect x="947" y="388" width="91" height="5" fill="#daa8d4"/><rect x="1041" y="329.5" width="9" height="6.5" fill="#e4c8d8"/><rect x="1041" y="336" width="9" height="6" fill="#dfb2c4"/><rect x="1041" y="342" width="9" height="2" fill="#ead4e2"/><rect x="1041" y="344" width="9" height="6" fill="#e2b4c2"/><rect x="1041" y="350" width="9" height="6" fill="#e6cad8"/><rect x="1041" y="356" width="9" height="6" fill="#e2bcd0"/><rect x="1041" y="362" width="9" height="6" fill="#e4c6d6"/><rect x="1041" y="368" width="9" height="4" fill="#dcaed2"/><rect x="1041" y="372" width="9" height="6" fill="#e2b6c6"/><rect x="1041" y="378" width="9" height="5" fill="#e6cad8"/><rect x="1041" y="383" width="9" height="5" fill="#cddccc"/><rect x="1041" y="388" width="9" height="5" fill="#daa8d4"/><rect x="1054" y="329.5" width="78.5" height="6.5" fill="#e4c8d8"/><rect x="1054" y="336" width="78.5" height="6" fill="#dfb2c4"/><rect x="1054" y="342" width="78.5" height="2" fill="#ead4e2"/><rect x="1054" y="344" width="78.5" height="6" fill="#e2b4c2"/><rect x="1054" y="350" width="78.5" height="6" fill="#e6cad8"/><rect x="1054" y="356" width="78.5" height="6" fill="#e2bcd0"/><rect x="1054" y="362" width="78.5" height="6" fill="#e4c6d6"/><rect x="1054" y="368" width="78.5" height="4" fill="#dcaed2"/><rect x="1054" y="372" width="78.5" height="6" fill="#e2b6c6"/><rect x="1054" y="378" width="78.5" height="5" fill="#e6cad8"/><rect x="1054" y="383" width="78.5" height="5" fill="#cddccc"/><rect x="1054" y="388" width="78.5" height="5" fill="#daa8d4"/><rect x="1137" y="329.5" width="8" height="6.5" fill="#e4c8d8"/><rect x="1137" y="336" width="8" height="6" fill="#dfb2c4"/><rect x="1137" y="342" width="8" height="2" fill="#ead4e2"/><rect x="1137" y="344" width="8" height="6" fill="#e2b4c2"/><rect x="1137" y="350" width="8" height="6" fill="#e6cad8"/><rect x="1137" y="356" width="8" height="6" fill="#e2bcd0"/><rect x="1137" y="362" width="8" height="6" fill="#e4c6d6"/><rect x="1137" y="368" width="8" height="4" fill="#dcaed2"/><rect x="1137" y="372" width="8" height="6" fill="#e2b6c6"/><rect x="1137" y="378" width="8" height="5" fill="#e6cad8"/><rect x="1137" y="383" width="8" height="5" fill="#cddccc"/><rect x="1137" y="388" width="8" height="5" fill="#daa8d4"/><rect x="1145" y="329.5" width="7" height="6.5" fill="#e4c8d8"/><rect x="1145" y="336" width="7" height="6" fill="#dfb2c4"/><rect x="1145" y="342" width="7" height="2" fill="#ead4e2"/><rect x="1145" y="344" width="7" height="2" fill="#e2b4c2"/><rect x="1152" y="329.5" width="100" height="6.5" fill="#e4c8d8"/><rect x="1152" y="336" width="100" height="6" fill="#dfb2c4"/><rect x="1152" y="342" width="100" height="2" fill="#ead4e2"/><rect x="1152" y="344" width="100" height="6" fill="#e2b4c2"/><rect x="1152" y="350" width="100" height="6" fill="#e6cad8"/><rect x="1152" y="356" width="100" height="6" fill="#e2bcd0"/><rect x="1152" y="362" width="100" height="6" fill="#e4c6d6"/><rect x="1152" y="368" width="100" height="4" fill="#dcaed2"/><rect x="1152" y="372" width="100" height="6" fill="#e2b6c6"/><rect x="1152" y="378" width="100" height="5" fill="#e6cad8"/><rect x="1152" y="383" width="100" height="5" fill="#cddccc"/><rect x="1152" y="388" width="100" height="5" fill="#daa8d4"/><rect x="1261" y="329.5" width="75" height="6.5" fill="#e4c8d8"/><rect x="1261" y="336" width="75" height="6" fill="#dfb2c4"/><rect x="1261" y="342" width="75" height="2" fill="#ead4e2"/><rect x="1261" y="344" width="75" height="6" fill="#e2b4c2"/><rect x="1261" y="350" width="75" height="6" fill="#e6cad8"/><rect x="1261" y="356" width="75" height="6" fill="#e2bcd0"/><rect x="1261" y="362" width="75" height="6" fill="#e4c6d6"/><rect x="1261" y="368" width="75" height="4" fill="#dcaed2"/><rect x="1261" y="372" width="75" height="6" fill="#e2b6c6"/><rect x="1261" y="378" width="75" height="5" fill="#e6cad8"/><rect x="1261" y="383" width="75" height="5" fill="#cddccc"/><rect x="1261" y="388" width="75" height="5" fill="#daa8d4"/><rect x="1361" y="329.5" width="87" height="6.5" fill="#e4c8d8"/><rect x="1361" y="336" width="87" height="6" fill="#dfb2c4"/><rect x="1361" y="342" width="87" height="2" fill="#ead4e2"/><rect x="1361" y="344" width="87" height="6" fill="#e2b4c2"/><rect x="1361" y="350" width="87" height="6" fill="#e6cad8"/><rect x="1361" y="356" width="87" height="6" fill="#e2bcd0"/><rect x="1361" y="362" width="87" height="6" fill="#e4c6d6"/><rect x="1361" y="368" width="87" height="4" fill="#dcaed2"/><rect x="1361" y="372" width="87" height="6" fill="#e2b6c6"/><rect x="1361" y="378" width="87" height="5" fill="#e6cad8"/><rect x="1361" y="383" width="87" height="5" fill="#cddccc"/><rect x="1361" y="388" width="87" height="5" fill="#daa8d4"/><rect x="1456" y="329.5" width="86" height="6.5" fill="#e4c8d8"/><rect x="1456" y="336" width="86" height="6" fill="#dfb2c4"/><rect x="1456" y="342" width="86" height="2" fill="#ead4e2"/><rect x="1456" y="344" width="86" height="6" fill="#e2b4c2"/><rect x="1456" y="350" width="86" height="6" fill="#e6cad8"/><rect x="1456" y="356" width="86" height="6" fill="#e2bcd0"/><rect x="1456" y="362" width="86" height="6" fill="#e4c6d6"/><rect x="1456" y="368" width="86" height="4" fill="#dcaed2"/><rect x="1456" y="372" width="86" height="6" fill="#e2b6c6"/><rect x="1456" y="378" width="86" height="5" fill="#e6cad8"/><rect x="1456" y="383" width="86" height="5" fill="#cddccc"/><rect x="1456" y="388" width="86" height="5" fill="#daa8d4"/><rect x="1542" y="329.5" width="14" height="6.5" fill="#e4c8d8"/><rect x="1542" y="336" width="14" height="6" fill="#dfb2c4"/><rect x="1542" y="342" width="14" height="2" fill="#ead4e2"/><rect x="1542" y="344" width="14" height="6" fill="#e2b4c2"/><rect x="1542" y="350" width="14" height="6" fill="#e6cad8"/><rect x="1542" y="356" width="14" height="6" fill="#e2bcd0"/><rect x="1542" y="362" width="14" height="6" fill="#e4c6d6"/><rect x="1556" y="329.5" width="189.5999999999999" height="6.5" fill="#e4c8d8"/><rect x="1556" y="336" width="189.5999999999999" height="6" fill="#dfb2c4"/><rect x="1556" y="342" width="189.5999999999999" height="2" fill="#ead4e2"/><rect x="1556" y="344" width="189.5999999999999" height="6" fill="#e2b4c2"/><rect x="1556" y="350" width="189.5999999999999" height="6" fill="#e6cad8"/><rect x="1556" y="356" width="189.5999999999999" height="6" fill="#e2bcd0"/><rect x="1556" y="362" width="189.5999999999999" height="6" fill="#e4c6d6"/><rect x="1556" y="368" width="189.5999999999999" height="4" fill="#dcaed2"/><rect x="1556" y="372" width="189.5999999999999" height="6" fill="#e2b6c6"/><rect x="1556" y="378" width="189.5999999999999" height="5" fill="#e6cad8"/><rect x="1556" y="383" width="189.5999999999999" height="5" fill="#cddccc"/><rect x="1556" y="388" width="189.5999999999999" height="5" fill="#daa8d4"/><rect x="1758" y="329.5" width="42" height="6.5" fill="#e4c8d8"/><rect x="1758" y="336" width="42" height="6" fill="#dfb2c4"/><rect x="1758" y="342" width="42" height="2" fill="#ead4e2"/><rect x="1758" y="344" width="42" height="6" fill="#e2b4c2"/><rect x="1758" y="350" width="42" height="6" fill="#e6cad8"/><rect x="1758" y="356" width="42" height="6" fill="#e2bcd0"/><rect x="1758" y="362" width="42" height="6" fill="#e4c6d6"/><rect x="1758" y="368" width="42" height="4" fill="#dcaed2"/><rect x="1758" y="372" width="42" height="6" fill="#e2b6c6"/><rect x="1758" y="378" width="42" height="5" fill="#e6cad8"/><rect x="1758" y="383" width="42" height="5" fill="#cddccc"/><rect x="1758" y="388" width="42" height="5" fill="#daa8d4"/><rect x="1800" y="329.5" width="148.70000000000005" height="6.5" fill="#e4c8d8"/><rect x="1800" y="336" width="148.70000000000005" height="6" fill="#dfb2c4"/><rect x="1800" y="342" width="148.70000000000005" height="2" fill="#ead4e2"/><rect x="1800" y="344" width="148.70000000000005" height="6" fill="#e2b4c2"/><rect x="1800" y="350" width="148.70000000000005" height="6" fill="#e6cad8"/><rect x="1800" y="356" width="148.70000000000005" height="6" fill="#e2bcd0"/><rect x="1800" y="362" width="148.70000000000005" height="6" fill="#e4c6d6"/><rect x="1800" y="368" width="148.70000000000005" height="4" fill="#dcaed2"/><rect x="1800" y="372" width="148.70000000000005" height="6" fill="#e2b6c6"/><rect x="1800" y="378" width="148.70000000000005" height="5" fill="#e6cad8"/><rect x="1800" y="383" width="148.70000000000005" height="5" fill="#cddccc"/><rect x="1800" y="388" width="148.70000000000005" height="5" fill="#daa8d4"/><rect x="1948.7" y="329.5" width="57.299999999999955" height="6.5" fill="#e4c8d8"/><rect x="1948.7" y="336" width="57.299999999999955" height="6" fill="#dfb2c4"/><rect x="1948.7" y="342" width="57.299999999999955" height="2" fill="#ead4e2"/><rect x="1948.7" y="344" width="57.299999999999955" height="2" fill="#e2b4c2"/><rect x="2003" y="329.5" width="4" height="6.5" fill="#e4c8d8"/><rect x="2003" y="336" width="4" height="6" fill="#dfb2c4"/><rect x="2003" y="342" width="4" height="2" fill="#ead4e2"/><rect x="2003" y="344" width="4" height="6" fill="#e2b4c2"/><rect x="2003" y="350" width="4" height="6" fill="#e6cad8"/><rect x="2003" y="356" width="4" height="6" fill="#e2bcd0"/><rect x="2003" y="362" width="4" height="6" fill="#e4c6d6"/><rect x="2003" y="368" width="4" height="4" fill="#dcaed2"/><rect x="2003" y="372" width="4" height="6" fill="#e2b6c6"/><rect x="2003" y="378" width="4" height="5" fill="#e6cad8"/><rect x="2003" y="383" width="4" height="5" fill="#cddccc"/><rect x="2003" y="388" width="4" height="5" fill="#daa8d4"/><rect x="2247" y="329.5" width="28" height="6.5" fill="#e4c8d8"/><rect x="2247" y="336" width="28" height="6" fill="#dfb2c4"/><rect x="2247" y="342" width="28" height="2" fill="#ead4e2"/><rect x="2247" y="344" width="28" height="6" fill="#e2b4c2"/><rect x="2247" y="350" width="28" height="6" fill="#e6cad8"/><rect x="2247" y="356" width="28" height="6" fill="#e2bcd0"/><rect x="2247" y="362" width="28" height="6" fill="#e4c6d6"/><rect x="2247" y="368" width="28" height="4" fill="#dcaed2"/><rect x="2247" y="372" width="28" height="6" fill="#e2b6c6"/><rect x="2247" y="378" width="28" height="5" fill="#e6cad8"/><rect x="2247" y="383" width="28" height="5" fill="#cddccc"/><rect x="2247" y="388" width="28" height="5" fill="#daa8d4"/><rect x="2275" y="329.5" width="123" height="6.5" fill="#e4c8d8"/><rect x="2275" y="336" width="123" height="6" fill="#dfb2c4"/><rect x="2275" y="342" width="123" height="2" fill="#ead4e2"/><rect x="2275" y="344" width="123" height="6" fill="#e2b4c2"/><rect x="2275" y="350" width="123" height="6" fill="#e6cad8"/><rect x="2275" y="356" width="123" height="6" fill="#e2bcd0"/><rect x="2275" y="362" width="123" height="6" fill="#e4c6d6"/><rect x="2275" y="368" width="123" height="4" fill="#dcaed2"/><rect x="2275" y="372" width="123" height="4" fill="#e2b6c6"/><rect x="2395" y="329.5" width="4" height="6.5" fill="#e4c8d8"/><rect x="2395" y="336" width="4" height="6" fill="#dfb2c4"/><rect x="2395" y="342" width="4" height="2" fill="#ead4e2"/><rect x="2395" y="344" width="4" height="6" fill="#e2b4c2"/><rect x="2395" y="350" width="4" height="6" fill="#e6cad8"/><rect x="2395" y="356" width="4" height="6" fill="#e2bcd0"/><rect x="2395" y="362" width="4" height="6" fill="#e4c6d6"/><rect x="2395" y="368" width="4" height="4" fill="#dcaed2"/><rect x="2395" y="372" width="4" height="6" fill="#e2b6c6"/><rect x="2395" y="378" width="4" height="5" fill="#e6cad8"/><rect x="2395" y="383" width="4" height="5" fill="#cddccc"/><rect x="2395" y="388" width="4" height="5" fill="#daa8d4"/><rect x="420.6" y="393" width="4" height="6" fill="#d8a8d0"/><rect x="420.6" y="399" width="4" height="6" fill="#e6c0d0"/><rect x="420.6" y="405" width="4" height="6" fill="#d4c8c0"/><rect x="420.6" y="411" width="4" height="1" fill="#dcaac4"/><rect x="484" y="393" width="4" height="6" fill="#e6c0d0"/><rect x="484" y="399" width="4" height="5" fill="#d4c8c0"/><rect x="524.6" y="393" width="4" height="6" fill="#d4c8c0"/><rect x="524.6" y="399" width="4" height="6" fill="#dcaac4"/><rect x="524.6" y="405" width="4" height="6" fill="#e0b4c8"/><rect x="524.6" y="411" width="4" height="1" fill="#d8a8d0"/><rect x="566" y="393" width="4" height="6" fill="#dcaac4"/><rect x="566" y="399" width="4" height="6" fill="#e0b4c8"/><rect x="566" y="405" width="4" height="6" fill="#d8a8d0"/><rect x="566" y="411" width="4" height="6" fill="#e6c0d0"/><rect x="566" y="417" width="4" height="6" fill="#d4c8c0"/><rect x="566" y="423" width="4" height="6" fill="#dcaac4"/><rect x="566" y="429" width="4" height="6" fill="#e0b4c8"/><rect x="566" y="435" width="4" height="2" fill="#d8a8d0"/><rect x="610.7" y="393" width="4" height="6" fill="#e0b4c8"/><rect x="610.7" y="399" width="4" height="6" fill="#d8a8d0"/><rect x="610.7" y="405" width="4" height="6" fill="#e6c0d0"/><rect x="610.7" y="411" width="4" height="4" fill="#d4c8c0"/><rect x="639.6" y="393" width="4" height="6" fill="#d8a8d0"/><rect x="639.6" y="399" width="4" height="6" fill="#e6c0d0"/><rect x="639.6" y="405" width="4" height="6" fill="#d4c8c0"/><rect x="639.6" y="411" width="4" height="4" fill="#dcaac4"/><rect x="663" y="393" width="4" height="6" fill="#e6c0d0"/><rect x="663" y="399" width="4" height="6" fill="#d4c8c0"/><rect x="663" y="405" width="4" height="1" fill="#dcaac4"/><rect x="672.8" y="393" width="4" height="6" fill="#d4c8c0"/><rect x="672.8" y="399" width="4" height="6" fill="#dcaac4"/><rect x="672.8" y="405" width="4" height="4" fill="#e0b4c8"/><rect x="713.5" y="393" width="4" height="6" fill="#dcaac4"/><rect x="713.5" y="399" width="4" height="6" fill="#e0b4c8"/><rect x="713.5" y="405" width="4" height="6" fill="#d8a8d0"/><rect x="713.5" y="411" width="4" height="4" fill="#e6c0d0"/><rect x="734" y="393" width="4" height="6" fill="#e0b4c8"/><rect x="734" y="399" width="4" height="6" fill="#d8a8d0"/><rect x="734" y="405" width="4" height="4" fill="#e6c0d0"/><rect x="748" y="393" width="4" height="6" fill="#d8a8d0"/><rect x="748" y="399" width="4" height="6" fill="#e6c0d0"/><rect x="748" y="405" width="4" height="6" fill="#d4c8c0"/><rect x="748" y="411" width="4" height="6" fill="#dcaac4"/><rect x="748" y="417" width="4" height="6" fill="#e0b4c8"/><rect x="748" y="423" width="4" height="6" fill="#d8a8d0"/><rect x="748" y="429" width="4" height="6" fill="#e6c0d0"/><rect x="748" y="435" width="4" height="6" fill="#d4c8c0"/><rect x="748" y="441" width="4" height="2" fill="#dcaac4"/><rect x="785" y="393" width="4" height="6" fill="#e6c0d0"/><rect x="785" y="399" width="4" height="6" fill="#d4c8c0"/><rect x="785" y="405" width="4" height="1" fill="#dcaac4"/><rect x="813.5" y="393" width="4" height="6" fill="#d4c8c0"/><rect x="813.5" y="399" width="4" height="6" fill="#dcaac4"/><rect x="813.5" y="405" width="4" height="6" fill="#e0b4c8"/><rect x="813.5" y="411" width="4" height="4" fill="#d8a8d0"/><rect x="863" y="393" width="4" height="6" fill="#dcaac4"/><rect x="863" y="399" width="4" height="6" fill="#e0b4c8"/><rect x="863" y="405" width="4" height="6" fill="#d8a8d0"/><rect x="863" y="411" width="4" height="1" fill="#e6c0d0"/><rect x="875.5" y="393" width="4" height="6" fill="#e0b4c8"/><rect x="875.5" y="399" width="4" height="6" fill="#d8a8d0"/><rect x="875.5" y="405" width="4" height="4" fill="#e6c0d0"/><rect x="893" y="393" width="4" height="6" fill="#d8a8d0"/><rect x="893" y="399" width="4" height="6" fill="#e6c0d0"/><rect x="893" y="405" width="4" height="6" fill="#d4c8c0"/><rect x="893" y="411" width="4" height="6" fill="#dcaac4"/><rect x="893" y="417" width="4" height="6" fill="#e0b4c8"/><rect x="893" y="423" width="4" height="6" fill="#d8a8d0"/><rect x="893" y="429" width="4" height="6" fill="#e6c0d0"/><rect x="893" y="435" width="4" height="6" fill="#d4c8c0"/><rect x="893" y="441" width="4" height="5" fill="#dcaac4"/><rect x="908" y="393" width="4" height="6" fill="#e6c0d0"/><rect x="908" y="399" width="4" height="6" fill="#d4c8c0"/><rect x="908" y="405" width="4" height="6" fill="#dcaac4"/><rect x="908" y="411" width="4" height="6" fill="#e0b4c8"/><rect x="908" y="417" width="4" height="6" fill="#d8a8d0"/><rect x="908" y="423" width="4" height="6" fill="#e6c0d0"/><rect x="908" y="429" width="4" height="6" fill="#d4c8c0"/><rect x="908" y="435" width="4" height="6" fill="#dcaac4"/><rect x="908" y="441" width="4" height="5" fill="#e0b4c8"/><rect x="917.5" y="393" width="4" height="6" fill="#d4c8c0"/><rect x="917.5" y="399" width="4" height="6" fill="#dcaac4"/><rect x="917.5" y="405" width="4" height="6" fill="#e0b4c8"/><rect x="917.5" y="411" width="4" height="6" fill="#d8a8d0"/><rect x="917.5" y="417" width="4" height="6" fill="#e6c0d0"/><rect x="917.5" y="423" width="4" height="3" fill="#d4c8c0"/><rect x="1028" y="393" width="4" height="6" fill="#dcaac4"/><rect x="1028" y="399" width="4" height="3" fill="#e0b4c8"/><rect x="1095.8" y="393" width="4" height="6" fill="#e0b4c8"/><rect x="1095.8" y="399" width="4" height="6" fill="#d8a8d0"/><rect x="1095.8" y="405" width="4" height="6" fill="#e6c0d0"/><rect x="1095.8" y="411" width="4" height="6" fill="#d4c8c0"/><rect x="1095.8" y="417" width="4" height="6" fill="#dcaac4"/><rect x="1095.8" y="423" width="4" height="6" fill="#e0b4c8"/><rect x="1095.8" y="429" width="4" height="6" fill="#d8a8d0"/><rect x="1095.8" y="435" width="4" height="6" fill="#e6c0d0"/><rect x="1095.8" y="441" width="4" height="3" fill="#d4c8c0"/><rect x="1121" y="393" width="4" height="6" fill="#d8a8d0"/><rect x="1121" y="399" width="4" height="6" fill="#e6c0d0"/><rect x="1121" y="405" width="4" height="6" fill="#d4c8c0"/><rect x="1121" y="411" width="4" height="6" fill="#dcaac4"/><rect x="1121" y="417" width="4" height="6" fill="#e0b4c8"/><rect x="1121" y="423" width="4" height="6" fill="#d8a8d0"/><rect x="1121" y="429" width="4" height="6" fill="#e6c0d0"/><rect x="1121" y="435" width="4" height="6" fill="#d4c8c0"/><rect x="1121" y="441" width="4" height="5" fill="#dcaac4"/><rect x="1136.8" y="393" width="4" height="6" fill="#e6c0d0"/><rect x="1136.8" y="399" width="4" height="6" fill="#d4c8c0"/><rect x="1136.8" y="405" width="4" height="6" fill="#dcaac4"/><rect x="1136.8" y="411" width="4" height="6" fill="#e0b4c8"/><rect x="1136.8" y="417" width="4" height="6" fill="#d8a8d0"/><rect x="1136.8" y="423" width="4" height="6" fill="#e6c0d0"/><rect x="1136.8" y="429" width="4" height="6" fill="#d4c8c0"/><rect x="1136.8" y="435" width="4" height="6" fill="#dcaac4"/><rect x="1136.8" y="441" width="4" height="6" fill="#e0b4c8"/><rect x="1136.8" y="447" width="4" height="5" fill="#d8a8d0"/><rect x="1158" y="393" width="4" height="6" fill="#d4c8c0"/><rect x="1158" y="399" width="4" height="6" fill="#dcaac4"/><rect x="1158" y="405" width="4" height="5" fill="#e0b4c8"/><rect x="1220" y="393" width="4" height="6" fill="#dcaac4"/><rect x="1220" y="399" width="4" height="6" fill="#e0b4c8"/><rect x="1220" y="405" width="4" height="6" fill="#d8a8d0"/><rect x="1220" y="411" width="4" height="6" fill="#e6c0d0"/><rect x="1220" y="417" width="4" height="6" fill="#d4c8c0"/><rect x="1220" y="423" width="4" height="6" fill="#dcaac4"/><rect x="1220" y="429" width="4" height="6" fill="#e0b4c8"/><rect x="1220" y="435" width="4" height="6" fill="#d8a8d0"/><rect x="1220" y="441" width="4" height="3" fill="#e6c0d0"/><rect x="1248.6" y="393" width="4" height="6" fill="#e0b4c8"/><rect x="1248.6" y="399" width="4" height="6" fill="#d8a8d0"/><rect x="1248.6" y="405" width="4" height="5" fill="#e6c0d0"/><rect x="1265" y="393" width="4" height="6" fill="#d8a8d0"/><rect x="1265" y="399" width="4" height="6" fill="#e6c0d0"/><rect x="1265" y="405" width="4" height="6" fill="#d4c8c0"/><rect x="1265" y="411" width="4" height="6" fill="#dcaac4"/><rect x="1265" y="417" width="4" height="6" fill="#e0b4c8"/><rect x="1265" y="423" width="4" height="4" fill="#d8a8d0"/><rect x="1290" y="393" width="4" height="6" fill="#e6c0d0"/><rect x="1290" y="399" width="4" height="6" fill="#d4c8c0"/><rect x="1290" y="405" width="4" height="6" fill="#dcaac4"/><rect x="1290" y="411" width="4" height="6" fill="#e0b4c8"/><rect x="1290" y="417" width="4" height="6" fill="#d8a8d0"/><rect x="1290" y="423" width="4" height="6" fill="#e6c0d0"/><rect x="1290" y="429" width="4" height="6" fill="#d4c8c0"/><rect x="1290" y="435" width="4" height="6" fill="#dcaac4"/><rect x="1290" y="441" width="4" height="3" fill="#e0b4c8"/><rect x="1298" y="393" width="4" height="6" fill="#d4c8c0"/><rect x="1298" y="399" width="4" height="6" fill="#dcaac4"/><rect x="1298" y="405" width="4" height="6" fill="#e0b4c8"/><rect x="1298" y="411" width="4" height="6" fill="#d8a8d0"/><rect x="1298" y="417" width="4" height="3" fill="#e6c0d0"/><rect x="1306.6" y="393" width="4" height="6" fill="#dcaac4"/><rect x="1306.6" y="399" width="4" height="6" fill="#e0b4c8"/><rect x="1306.6" y="405" width="4" height="6" fill="#d8a8d0"/><rect x="1306.6" y="411" width="4" height="6" fill="#e6c0d0"/><rect x="1306.6" y="417" width="4" height="6" fill="#d4c8c0"/><rect x="1306.6" y="423" width="4" height="6" fill="#dcaac4"/><rect x="1306.6" y="429" width="4" height="6" fill="#e0b4c8"/><rect x="1306.6" y="435" width="4" height="6" fill="#d8a8d0"/><rect x="1306.6" y="441" width="4" height="6" fill="#e6c0d0"/><rect x="1306.6" y="447" width="4" height="5" fill="#d4c8c0"/><rect x="1319" y="393" width="4" height="6" fill="#e0b4c8"/><rect x="1319" y="399" width="4" height="6" fill="#d8a8d0"/><rect x="1319" y="405" width="4" height="1" fill="#e6c0d0"/><rect x="1385.5" y="393" width="4" height="6" fill="#d8a8d0"/><rect x="1385.5" y="399" width="4" height="6" fill="#e6c0d0"/><rect x="1385.5" y="405" width="4" height="6" fill="#d4c8c0"/><rect x="1385.5" y="411" width="4" height="6" fill="#dcaac4"/><rect x="1385.5" y="417" width="4" height="6" fill="#e0b4c8"/><rect x="1385.5" y="423" width="4" height="6" fill="#d8a8d0"/><rect x="1385.5" y="429" width="4" height="6" fill="#e6c0d0"/><rect x="1385.5" y="435" width="4" height="6" fill="#d4c8c0"/><rect x="1385.5" y="441" width="4" height="6" fill="#dcaac4"/><rect x="1385.5" y="447" width="4" height="2" fill="#e0b4c8"/><rect x="1400.7" y="393" width="4" height="6" fill="#e6c0d0"/><rect x="1400.7" y="399" width="4" height="6" fill="#d4c8c0"/><rect x="1400.7" y="405" width="4" height="4" fill="#dcaac4"/><rect x="1462.8" y="393" width="4" height="6" fill="#d4c8c0"/><rect x="1462.8" y="399" width="4" height="6" fill="#dcaac4"/><rect x="1462.8" y="405" width="4" height="1" fill="#e0b4c8"/><rect x="1481" y="393" width="4" height="6" fill="#dcaac4"/><rect x="1481" y="399" width="4" height="6" fill="#e0b4c8"/><rect x="1481" y="405" width="4" height="4" fill="#d8a8d0"/><rect x="1513.5" y="393" width="4" height="6" fill="#e0b4c8"/><rect x="1513.5" y="399" width="4" height="6" fill="#d8a8d0"/><rect x="1513.5" y="405" width="4" height="6" fill="#e6c0d0"/><rect x="1513.5" y="411" width="4" height="4" fill="#d4c8c0"/><rect x="1600.4" y="393" width="4" height="6" fill="#d8a8d0"/><rect x="1600.4" y="399" width="4" height="5" fill="#e6c0d0"/><rect x="1617.5" y="393" width="4" height="6" fill="#e6c0d0"/><rect x="1617.5" y="399" width="4" height="6" fill="#d4c8c0"/><rect x="1617.5" y="405" width="4" height="6" fill="#dcaac4"/><rect x="1617.5" y="411" width="4" height="4" fill="#e0b4c8"/><rect x="1662.5" y="393" width="4" height="6" fill="#d4c8c0"/><rect x="1662.5" y="399" width="4" height="6" fill="#dcaac4"/><rect x="1662.5" y="405" width="4" height="5" fill="#e0b4c8"/><rect x="1675.6" y="393" width="4" height="6" fill="#dcaac4"/><rect x="1675.6" y="399" width="4" height="6" fill="#e0b4c8"/><rect x="1675.6" y="405" width="4" height="4" fill="#d8a8d0"/><rect x="1695.8" y="393" width="4" height="6" fill="#e0b4c8"/><rect x="1695.8" y="399" width="4" height="6" fill="#d8a8d0"/><rect x="1695.8" y="405" width="4" height="6" fill="#e6c0d0"/><rect x="1695.8" y="411" width="4" height="6" fill="#d4c8c0"/><rect x="1695.8" y="417" width="4" height="6" fill="#dcaac4"/><rect x="1695.8" y="423" width="4" height="6" fill="#e0b4c8"/><rect x="1695.8" y="429" width="4" height="6" fill="#d8a8d0"/><rect x="1695.8" y="435" width="4" height="6" fill="#e6c0d0"/><rect x="1695.8" y="441" width="4" height="6" fill="#d4c8c0"/><rect x="1695.8" y="447" width="4" height="6" fill="#dcaac4"/><rect x="1695.8" y="453" width="4" height="6" fill="#e0b4c8"/><rect x="1695.8" y="459" width="4" height="6" fill="#d8a8d0"/><rect x="1695.8" y="465" width="4" height="6" fill="#e6c0d0"/><rect x="1795.5" y="393" width="4" height="6" fill="#d8a8d0"/><rect x="1795.5" y="399" width="4" height="6" fill="#e6c0d0"/><rect x="1795.5" y="405" width="4" height="6" fill="#d4c8c0"/><rect x="1795.5" y="411" width="4" height="6" fill="#dcaac4"/><rect x="1795.5" y="417" width="4" height="6" fill="#e0b4c8"/><rect x="1795.5" y="423" width="4" height="6" fill="#d8a8d0"/><rect x="1795.5" y="429" width="4" height="6" fill="#e6c0d0"/><rect x="1795.5" y="435" width="4" height="6" fill="#d4c8c0"/><rect x="1795.5" y="441" width="4" height="3" fill="#dcaac4"/><rect x="1808" y="393" width="4" height="6" fill="#e6c0d0"/><rect x="1808" y="399" width="4" height="6" fill="#d4c8c0"/><rect x="1808" y="405" width="4" height="6" fill="#dcaac4"/><rect x="1808" y="411" width="4" height="6" fill="#e0b4c8"/><rect x="1808" y="417" width="4" height="6" fill="#d8a8d0"/><rect x="1808" y="423" width="4" height="6" fill="#e6c0d0"/><rect x="1808" y="429" width="4" height="6" fill="#d4c8c0"/><rect x="1808" y="435" width="4" height="6" fill="#dcaac4"/><rect x="1808" y="441" width="4" height="3" fill="#e0b4c8"/><rect x="2118.4" y="330" width="4" height="6" fill="#e0b4c8"/><rect x="2118.4" y="336" width="4" height="6" fill="#d8a8d0"/><rect x="2118.4" y="342" width="4" height="6" fill="#e6c0d0"/><rect x="2118.4" y="348" width="4" height="6" fill="#d4c8c0"/><rect x="2118.4" y="354" width="4" height="6" fill="#dcaac4"/><rect x="2118.4" y="360" width="4" height="6" fill="#e0b4c8"/><rect x="2118.4" y="366" width="4" height="6" fill="#d8a8d0"/><rect x="2118.4" y="372" width="4" height="6" fill="#e6c0d0"/><rect x="2118.4" y="378" width="4" height="5" fill="#d4c8c0"/><rect x="2316" y="376" width="4" height="6" fill="#e0b4c8"/><rect x="2316" y="382" width="4" height="6" fill="#d8a8d0"/><rect x="2316" y="388" width="4" height="6" fill="#e6c0d0"/><rect x="2316" y="394" width="4" height="6" fill="#d4c8c0"/><rect x="2316" y="400" width="4" height="6" fill="#dcaac4"/><rect x="2316" y="406" width="4" height="6" fill="#e0b4c8"/><rect x="2316" y="412" width="4" height="6" fill="#d8a8d0"/><rect x="2316" y="418" width="4" height="6" fill="#e6c0d0"/><rect x="2316" y="424" width="4" height="6" fill="#d4c8c0"/><rect x="2316" y="430" width="4" height="6" fill="#dcaac4"/><rect x="2316" y="436" width="4" height="6" fill="#e0b4c8"/><rect x="2316" y="442" width="4" height="4" fill="#d8a8d0"/><rect x="2834" y="329.5" width="4" height="6" fill="#e0b4c8"/><rect x="2834" y="335.5" width="4" height="6" fill="#d8a8d0"/><rect x="2834" y="341.5" width="4" height="6" fill="#e6c0d0"/><rect x="2834" y="347.5" width="4" height="6" fill="#d4c8c0"/><rect x="2834" y="353.5" width="4" height="6" fill="#dcaac4"/><rect x="2834" y="359.5" width="4" height="5.5" fill="#e0b4c8"/><defs><clipPath id="sel"><rect x="140" y="318.5" width="228" height="45.5"/></clipPath></defs><g clip-path="url(#sel)"><rect x="140" y="318.5" width="228" height="45.5" fill="#fafafa"/><g style="filter:brightness(1.1)"><rect x="140" y="305" width="2698" height="3" fill="#dca6c0"/><rect x="140" y="308" width="2698" height="6" fill="#dfb0c0"/><rect x="140" y="314" width="2698" height="7" fill="#e1c2cf"/><rect x="140" y="321" width="2698" height="6" fill="#dcaad6"/><rect x="140" y="327" width="2698" height="2.5" fill="#e4cfdb"/><rect x="140" y="329.5" width="41" height="6.5" fill="#e4c8d8"/><rect x="140" y="336" width="41" height="6" fill="#dfb2c4"/><rect x="140" y="342" width="41" height="2" fill="#ead4e2"/><rect x="140" y="344" width="41" height="6" fill="#e2b4c2"/><rect x="140" y="350" width="41" height="6" fill="#e6cad8"/><rect x="140" y="356" width="41" height="6" fill="#e2bcd0"/><rect x="140" y="362" width="41" height="6" fill="#e4c6d6"/><rect x="140" y="368" width="41" height="4" fill="#dcaed2"/><rect x="140" y="372" width="41" height="6" fill="#e2b6c6"/><rect x="140" y="378" width="41" height="5" fill="#e6cad8"/><rect x="140" y="383" width="41" height="5" fill="#cddccc"/><rect x="140" y="388" width="41" height="5" fill="#daa8d4"/><rect x="181" y="329.5" width="80" height="6.5" fill="#e4c8d8"/><rect x="181" y="336" width="80" height="6" fill="#dfb2c4"/><rect x="181" y="342" width="80" height="2" fill="#ead4e2"/><rect x="181" y="344" width="80" height="6" fill="#e2b4c2"/><rect x="181" y="350" width="80" height="6" fill="#e6cad8"/><rect x="181" y="356" width="80" height="6" fill="#e2bcd0"/><rect x="181" y="362" width="80" height="6" fill="#e4c6d6"/><rect x="181" y="368" width="80" height="4" fill="#dcaed2"/><rect x="181" y="372" width="80" height="6" fill="#e2b6c6"/><rect x="181" y="378" width="80" height="5" fill="#e6cad8"/><rect x="261" y="329.5" width="7" height="6.5" fill="#e4c8d8"/><rect x="261" y="336" width="7" height="6" fill="#dfb2c4"/><rect x="261" y="342" width="7" height="2" fill="#ead4e2"/><rect x="261" y="344" width="7" height="6" fill="#e2b4c2"/><rect x="261" y="350" width="7" height="6" fill="#e6cad8"/><rect x="261" y="356" width="7" height="6" fill="#e2bcd0"/><rect x="261" y="362" width="7" height="6" fill="#e4c6d6"/><rect x="261" y="368" width="7" height="4" fill="#dcaed2"/><rect x="261" y="372" width="7" height="6" fill="#e2b6c6"/><rect x="261" y="378" width="7" height="5" fill="#e6cad8"/><rect x="261" y="383" width="7" height="5" fill="#cddccc"/><rect x="261" y="388" width="7" height="5" fill="#daa8d4"/><rect x="289" y="329.5" width="41" height="6.5" fill="#e4c8d8"/><rect x="289" y="336" width="41" height="6" fill="#dfb2c4"/><rect x="289" y="342" width="41" height="2" fill="#ead4e2"/><rect x="289" y="344" width="41" height="6" fill="#e2b4c2"/><rect x="289" y="350" width="41" height="6" fill="#e6cad8"/><rect x="289" y="356" width="41" height="6" fill="#e2bcd0"/><rect x="289" y="362" width="41" height="6" fill="#e4c6d6"/><rect x="289" y="368" width="41" height="4" fill="#dcaed2"/><rect x="289" y="372" width="41" height="6" fill="#e2b6c6"/><rect x="289" y="378" width="41" height="5" fill="#e6cad8"/><rect x="289" y="383" width="41" height="5" fill="#cddccc"/><rect x="289" y="388" width="41" height="5" fill="#daa8d4"/><rect x="349" y="329.5" width="5" height="6.5" fill="#e4c8d8"/><rect x="349" y="336" width="5" height="6" fill="#dfb2c4"/><rect x="349" y="342" width="5" height="2" fill="#ead4e2"/><rect x="349" y="344" width="5" height="6" fill="#e2b4c2"/><rect x="349" y="350" width="5" height="6" fill="#e6cad8"/><rect x="349" y="356" width="5" height="6" fill="#e2bcd0"/><rect x="349" y="362" width="5" height="6" fill="#e4c6d6"/><rect x="349" y="368" width="5" height="4" fill="#dcaed2"/><rect x="349" y="372" width="5" height="6" fill="#e2b6c6"/><rect x="349" y="378" width="5" height="5" fill="#e6cad8"/><rect x="349" y="383" width="5" height="5" fill="#cddccc"/><rect x="349" y="388" width="5" height="5" fill="#daa8d4"/><rect x="363" y="329.5" width="16" height="6.5" fill="#e4c8d8"/><rect x="363" y="336" width="16" height="6" fill="#dfb2c4"/><rect x="363" y="342" width="16" height="2" fill="#ead4e2"/><rect x="363" y="344" width="16" height="6" fill="#e2b4c2"/><rect x="363" y="350" width="16" height="6" fill="#e6cad8"/><rect x="363" y="356" width="16" height="6" fill="#e2bcd0"/><rect x="363" y="362" width="16" height="6" fill="#e4c6d6"/><rect x="363" y="368" width="16" height="4" fill="#dcaed2"/><rect x="363" y="372" width="16" height="6" fill="#e2b6c6"/><rect x="363" y="378" width="16" height="5" fill="#e6cad8"/><rect x="363" y="383" width="16" height="5" fill="#cddccc"/><rect x="363" y="388" width="16" height="5" fill="#daa8d4"/><rect x="384" y="329.5" width="20" height="6.5" fill="#e4c8d8"/><rect x="384" y="336" width="20" height="6" fill="#dfb2c4"/><rect x="384" y="342" width="20" height="2" fill="#ead4e2"/><rect x="384" y="344" width="20" height="6" fill="#e2b4c2"/><rect x="384" y="350" width="20" height="6" fill="#e6cad8"/><rect x="384" y="356" width="20" height="6" fill="#e2bcd0"/><rect x="384" y="362" width="20" height="6" fill="#e4c6d6"/><rect x="384" y="368" width="20" height="4" fill="#dcaed2"/><rect x="384" y="372" width="20" height="6" fill="#e2b6c6"/><rect x="384" y="378" width="20" height="5" fill="#e6cad8"/><rect x="384" y="383" width="20" height="5" fill="#cddccc"/><rect x="384" y="388" width="20" height="5" fill="#daa8d4"/><rect x="404" y="329.5" width="45" height="6.5" fill="#e4c8d8"/><rect x="404" y="336" width="45" height="6" fill="#dfb2c4"/><rect x="404" y="342" width="45" height="2" fill="#ead4e2"/><rect x="404" y="344" width="45" height="2" fill="#e2b4c2"/><rect x="449" y="329.5" width="17" height="6.5" fill="#e4c8d8"/><rect x="449" y="336" width="17" height="6" fill="#dfb2c4"/><rect x="449" y="342" width="17" height="2" fill="#ead4e2"/><rect x="449" y="344" width="17" height="6" fill="#e2b4c2"/><rect x="449" y="350" width="17" height="6" fill="#e6cad8"/><rect x="449" y="356" width="17" height="6" fill="#e2bcd0"/><rect x="449" y="362" width="17" height="6" fill="#e4c6d6"/><rect x="449" y="368" width="17" height="4" fill="#dcaed2"/><rect x="449" y="372" width="17" height="6" fill="#e2b6c6"/><rect x="449" y="378" width="17" height="5" fill="#e6cad8"/><rect x="449" y="383" width="17" height="5" fill="#cddccc"/><rect x="449" y="388" width="17" height="5" fill="#daa8d4"/><rect x="466" y="329.5" width="17" height="6.5" fill="#e4c8d8"/><rect x="466" y="336" width="17" height="6" fill="#dfb2c4"/><rect x="466" y="342" width="17" height="2" fill="#ead4e2"/><rect x="466" y="344" width="17" height="6" fill="#e2b4c2"/><rect x="466" y="350" width="17" height="6" fill="#e6cad8"/><rect x="466" y="356" width="17" height="6" fill="#e2bcd0"/><rect x="466" y="362" width="17" height="6" fill="#e4c6d6"/><rect x="466" y="368" width="17" height="4" fill="#dcaed2"/><rect x="466" y="372" width="17" height="6" fill="#e2b6c6"/><rect x="466" y="378" width="17" height="5" fill="#e6cad8"/><rect x="483" y="329.5" width="154" height="6.5" fill="#e4c8d8"/><rect x="483" y="336" width="154" height="6" fill="#dfb2c4"/><rect x="483" y="342" width="154" height="2" fill="#ead4e2"/><rect x="483" y="344" width="154" height="6" fill="#e2b4c2"/><rect x="483" y="350" width="154" height="6" fill="#e6cad8"/><rect x="483" y="356" width="154" height="6" fill="#e2bcd0"/><rect x="483" y="362" width="154" height="6" fill="#e4c6d6"/><rect x="483" y="368" width="154" height="4" fill="#dcaed2"/><rect x="483" y="372" width="154" height="6" fill="#e2b6c6"/><rect x="483" y="378" width="154" height="5" fill="#e6cad8"/><rect x="483" y="383" width="154" height="5" fill="#cddccc"/><rect x="483" y="388" width="154" height="5" fill="#daa8d4"/><rect x="642" y="329.5" width="89.60000000000002" height="6.5" fill="#e4c8d8"/><rect x="642" y="336" width="89.60000000000002" height="6" fill="#dfb2c4"/><rect x="642" y="342" width="89.60000000000002" height="2" fill="#ead4e2"/><rect x="642" y="344" width="89.60000000000002" height="6" fill="#e2b4c2"/><rect x="642" y="350" width="89.60000000000002" height="6" fill="#e6cad8"/><rect x="642" y="356" width="89.60000000000002" height="6" fill="#e2bcd0"/><rect x="642" y="362" width="89.60000000000002" height="6" fill="#e4c6d6"/><rect x="642" y="368" width="89.60000000000002" height="4" fill="#dcaed2"/><rect x="642" y="372" width="89.60000000000002" height="6" fill="#e2b6c6"/><rect x="642" y="378" width="89.60000000000002" height="5" fill="#e6cad8"/><rect x="642" y="383" width="89.60000000000002" height="5" fill="#cddccc"/><rect x="642" y="388" width="89.60000000000002" height="5" fill="#daa8d4"/><rect x="737" y="329.5" width="81.60000000000002" height="6.5" fill="#e4c8d8"/><rect x="737" y="336" width="81.60000000000002" height="6" fill="#dfb2c4"/><rect x="737" y="342" width="81.60000000000002" height="2" fill="#ead4e2"/><rect x="737" y="344" width="81.60000000000002" height="6" fill="#e2b4c2"/><rect x="737" y="350" width="81.60000000000002" height="6" fill="#e6cad8"/><rect x="737" y="356" width="81.60000000000002" height="6" fill="#e2bcd0"/><rect x="737" y="362" width="81.60000000000002" height="6" fill="#e4c6d6"/><rect x="737" y="368" width="81.60000000000002" height="4" fill="#dcaed2"/><rect x="737" y="372" width="81.60000000000002" height="6" fill="#e2b6c6"/><rect x="737" y="378" width="81.60000000000002" height="5" fill="#e6cad8"/><rect x="737" y="383" width="81.60000000000002" height="5" fill="#cddccc"/><rect x="737" y="388" width="81.60000000000002" height="5" fill="#daa8d4"/><rect x="823" y="329.5" width="20" height="6.5" fill="#e4c8d8"/><rect x="823" y="336" width="20" height="6" fill="#dfb2c4"/><rect x="823" y="342" width="20" height="2" fill="#ead4e2"/><rect x="823" y="344" width="20" height="6" fill="#e2b4c2"/><rect x="823" y="350" width="20" height="6" fill="#e6cad8"/><rect x="823" y="356" width="20" height="6" fill="#e2bcd0"/><rect x="823" y="362" width="20" height="6" fill="#e4c6d6"/><rect x="823" y="368" width="20" height="4" fill="#dcaed2"/><rect x="823" y="372" width="20" height="6" fill="#e2b6c6"/><rect x="823" y="378" width="20" height="5" fill="#e6cad8"/><rect x="823" y="383" width="20" height="5" fill="#cddccc"/><rect x="823" y="388" width="20" height="5" fill="#daa8d4"/><rect x="849" y="329.5" width="64" height="6.5" fill="#e4c8d8"/><rect x="849" y="336" width="64" height="6" fill="#dfb2c4"/><rect x="849" y="342" width="64" height="2" fill="#ead4e2"/><rect x="849" y="344" width="64" height="6" fill="#e2b4c2"/><rect x="849" y="350" width="64" height="6" fill="#e6cad8"/><rect x="849" y="356" width="64" height="6" fill="#e2bcd0"/><rect x="849" y="362" width="64" height="6" fill="#e4c6d6"/><rect x="849" y="368" width="64" height="4" fill="#dcaed2"/><rect x="849" y="372" width="64" height="6" fill="#e2b6c6"/><rect x="849" y="378" width="64" height="5" fill="#e6cad8"/><rect x="849" y="383" width="64" height="5" fill="#cddccc"/><rect x="849" y="388" width="64" height="5" fill="#daa8d4"/><rect x="919" y="329.5" width="21" height="6.5" fill="#e4c8d8"/><rect x="919" y="336" width="21" height="6" fill="#dfb2c4"/><rect x="919" y="342" width="21" height="2" fill="#ead4e2"/><rect x="919" y="344" width="21" height="6" fill="#e2b4c2"/><rect x="919" y="350" width="21" height="6" fill="#e6cad8"/><rect x="919" y="356" width="21" height="6" fill="#e2bcd0"/><rect x="919" y="362" width="21" height="6" fill="#e4c6d6"/><rect x="919" y="368" width="21" height="4" fill="#dcaed2"/><rect x="919" y="372" width="21" height="6" fill="#e2b6c6"/><rect x="919" y="378" width="21" height="5" fill="#e6cad8"/><rect x="919" y="383" width="21" height="5" fill="#cddccc"/><rect x="919" y="388" width="21" height="5" fill="#daa8d4"/><rect x="947" y="329.5" width="91" height="6.5" fill="#e4c8d8"/><rect x="947" y="336" width="91" height="6" fill="#dfb2c4"/><rect x="947" y="342" width="91" height="2" fill="#ead4e2"/><rect x="947" y="344" width="91" height="6" fill="#e2b4c2"/><rect x="947" y="350" width="91" height="6" fill="#e6cad8"/><rect x="947" y="356" width="91" height="6" fill="#e2bcd0"/><rect x="947" y="362" width="91" height="6" fill="#e4c6d6"/><rect x="947" y="368" width="91" height="4" fill="#dcaed2"/><rect x="947" y="372" width="91" height="6" fill="#e2b6c6"/><rect x="947" y="378" width="91" height="5" fill="#e6cad8"/><rect x="947" y="383" width="91" height="5" fill="#cddccc"/><rect x="947" y="388" width="91" height="5" fill="#daa8d4"/><rect x="1041" y="329.5" width="9" height="6.5" fill="#e4c8d8"/><rect x="1041" y="336" width="9" height="6" fill="#dfb2c4"/><rect x="1041" y="342" width="9" height="2" fill="#ead4e2"/><rect x="1041" y="344" width="9" height="6" fill="#e2b4c2"/><rect x="1041" y="350" width="9" height="6" fill="#e6cad8"/><rect x="1041" y="356" width="9" height="6" fill="#e2bcd0"/><rect x="1041" y="362" width="9" height="6" fill="#e4c6d6"/><rect x="1041" y="368" width="9" height="4" fill="#dcaed2"/><rect x="1041" y="372" width="9" height="6" fill="#e2b6c6"/><rect x="1041" y="378" width="9" height="5" fill="#e6cad8"/><rect x="1041" y="383" width="9" height="5" fill="#cddccc"/><rect x="1041" y="388" width="9" height="5" fill="#daa8d4"/><rect x="1054" y="329.5" width="78.5" height="6.5" fill="#e4c8d8"/><rect x="1054" y="336" width="78.5" height="6" fill="#dfb2c4"/><rect x="1054" y="342" width="78.5" height="2" fill="#ead4e2"/><rect x="1054" y="344" width="78.5" height="6" fill="#e2b4c2"/><rect x="1054" y="350" width="78.5" height="6" fill="#e6cad8"/><rect x="1054" y="356" width="78.5" height="6" fill="#e2bcd0"/><rect x="1054" y="362" width="78.5" height="6" fill="#e4c6d6"/><rect x="1054" y="368" width="78.5" height="4" fill="#dcaed2"/><rect x="1054" y="372" width="78.5" height="6" fill="#e2b6c6"/><rect x="1054" y="378" width="78.5" height="5" fill="#e6cad8"/><rect x="1054" y="383" width="78.5" height="5" fill="#cddccc"/><rect x="1054" y="388" width="78.5" height="5" fill="#daa8d4"/><rect x="1137" y="329.5" width="8" height="6.5" fill="#e4c8d8"/><rect x="1137" y="336" width="8" height="6" fill="#dfb2c4"/><rect x="1137" y="342" width="8" height="2" fill="#ead4e2"/><rect x="1137" y="344" width="8" height="6" fill="#e2b4c2"/><rect x="1137" y="350" width="8" height="6" fill="#e6cad8"/><rect x="1137" y="356" width="8" height="6" fill="#e2bcd0"/><rect x="1137" y="362" width="8" height="6" fill="#e4c6d6"/><rect x="1137" y="368" width="8" height="4" fill="#dcaed2"/><rect x="1137" y="372" width="8" height="6" fill="#e2b6c6"/><rect x="1137" y="378" width="8" height="5" fill="#e6cad8"/><rect x="1137" y="383" width="8" height="5" fill="#cddccc"/><rect x="1137" y="388" width="8" height="5" fill="#daa8d4"/><rect x="1145" y="329.5" width="7" height="6.5" fill="#e4c8d8"/><rect x="1145" y="336" width="7" height="6" fill="#dfb2c4"/><rect x="1145" y="342" width="7" height="2" fill="#ead4e2"/><rect x="1145" y="344" width="7" height="2" fill="#e2b4c2"/><rect x="1152" y="329.5" width="100" height="6.5" fill="#e4c8d8"/><rect x="1152" y="336" width="100" height="6" fill="#dfb2c4"/><rect x="1152" y="342" width="100" height="2" fill="#ead4e2"/><rect x="1152" y="344" width="100" height="6" fill="#e2b4c2"/><rect x="1152" y="350" width="100" height="6" fill="#e6cad8"/><rect x="1152" y="356" width="100" height="6" fill="#e2bcd0"/><rect x="1152" y="362" width="100" height="6" fill="#e4c6d6"/><rect x="1152" y="368" width="100" height="4" fill="#dcaed2"/><rect x="1152" y="372" width="100" height="6" fill="#e2b6c6"/><rect x="1152" y="378" width="100" height="5" fill="#e6cad8"/><rect x="1152" y="383" width="100" height="5" fill="#cddccc"/><rect x="1152" y="388" width="100" height="5" fill="#daa8d4"/><rect x="1261" y="329.5" width="75" height="6.5" fill="#e4c8d8"/><rect x="1261" y="336" width="75" height="6" fill="#dfb2c4"/><rect x="1261" y="342" width="75" height="2" fill="#ead4e2"/><rect x="1261" y="344" width="75" height="6" fill="#e2b4c2"/><rect x="1261" y="350" width="75" height="6" fill="#e6cad8"/><rect x="1261" y="356" width="75" height="6" fill="#e2bcd0"/><rect x="1261" y="362" width="75" height="6" fill="#e4c6d6"/><rect x="1261" y="368" width="75" height="4" fill="#dcaed2"/><rect x="1261" y="372" width="75" height="6" fill="#e2b6c6"/><rect x="1261" y="378" width="75" height="5" fill="#e6cad8"/><rect x="1261" y="383" width="75" height="5" fill="#cddccc"/><rect x="1261" y="388" width="75" height="5" fill="#daa8d4"/><rect x="1361" y="329.5" width="87" height="6.5" fill="#e4c8d8"/><rect x="1361" y="336" width="87" height="6" fill="#dfb2c4"/><rect x="1361" y="342" width="87" height="2" fill="#ead4e2"/><rect x="1361" y="344" width="87" height="6" fill="#e2b4c2"/><rect x="1361" y="350" width="87" height="6" fill="#e6cad8"/><rect x="1361" y="356" width="87" height="6" fill="#e2bcd0"/><rect x="1361" y="362" width="87" height="6" fill="#e4c6d6"/><rect x="1361" y="368" width="87" height="4" fill="#dcaed2"/><rect x="1361" y="372" width="87" height="6" fill="#e2b6c6"/><rect x="1361" y="378" width="87" height="5" fill="#e6cad8"/><rect x="1361" y="383" width="87" height="5" fill="#cddccc"/><rect x="1361" y="388" width="87" height="5" fill="#daa8d4"/><rect x="1456" y="329.5" width="86" height="6.5" fill="#e4c8d8"/><rect x="1456" y="336" width="86" height="6" fill="#dfb2c4"/><rect x="1456" y="342" width="86" height="2" fill="#ead4e2"/><rect x="1456" y="344" width="86" height="6" fill="#e2b4c2"/><rect x="1456" y="350" width="86" height="6" fill="#e6cad8"/><rect x="1456" y="356" width="86" height="6" fill="#e2bcd0"/><rect x="1456" y="362" width="86" height="6" fill="#e4c6d6"/><rect x="1456" y="368" width="86" height="4" fill="#dcaed2"/><rect x="1456" y="372" width="86" height="6" fill="#e2b6c6"/><rect x="1456" y="378" width="86" height="5" fill="#e6cad8"/><rect x="1456" y="383" width="86" height="5" fill="#cddccc"/><rect x="1456" y="388" width="86" height="5" fill="#daa8d4"/><rect x="1542" y="329.5" width="14" height="6.5" fill="#e4c8d8"/><rect x="1542" y="336" width="14" height="6" fill="#dfb2c4"/><rect x="1542" y="342" width="14" height="2" fill="#ead4e2"/><rect x="1542" y="344" width="14" height="6" fill="#e2b4c2"/><rect x="1542" y="350" width="14" height="6" fill="#e6cad8"/><rect x="1542" y="356" width="14" height="6" fill="#e2bcd0"/><rect x="1542" y="362" width="14" height="6" fill="#e4c6d6"/><rect x="1556" y="329.5" width="189.5999999999999" height="6.5" fill="#e4c8d8"/><rect x="1556" y="336" width="189.5999999999999" height="6" fill="#dfb2c4"/><rect x="1556" y="342" width="189.5999999999999" height="2" fill="#ead4e2"/><rect x="1556" y="344" width="189.5999999999999" height="6" fill="#e2b4c2"/><rect x="1556" y="350" width="189.5999999999999" height="6" fill="#e6cad8"/><rect x="1556" y="356" width="189.5999999999999" height="6" fill="#e2bcd0"/><rect x="1556" y="362" width="189.5999999999999" height="6" fill="#e4c6d6"/><rect x="1556" y="368" width="189.5999999999999" height="4" fill="#dcaed2"/><rect x="1556" y="372" width="189.5999999999999" height="6" fill="#e2b6c6"/><rect x="1556" y="378" width="189.5999999999999" height="5" fill="#e6cad8"/><rect x="1556" y="383" width="189.5999999999999" height="5" fill="#cddccc"/><rect x="1556" y="388" width="189.5999999999999" height="5" fill="#daa8d4"/><rect x="1758" y="329.5" width="42" height="6.5" fill="#e4c8d8"/><rect x="1758" y="336" width="42" height="6" fill="#dfb2c4"/><rect x="1758" y="342" width="42" height="2" fill="#ead4e2"/><rect x="1758" y="344" width="42" height="6" fill="#e2b4c2"/><rect x="1758" y="350" width="42" height="6" fill="#e6cad8"/><rect x="1758" y="356" width="42" height="6" fill="#e2bcd0"/><rect x="1758" y="362" width="42" height="6" fill="#e4c6d6"/><rect x="1758" y="368" width="42" height="4" fill="#dcaed2"/><rect x="1758" y="372" width="42" height="6" fill="#e2b6c6"/><rect x="1758" y="378" width="42" height="5" fill="#e6cad8"/><rect x="1758" y="383" width="42" height="5" fill="#cddccc"/><rect x="1758" y="388" width="42" height="5" fill="#daa8d4"/><rect x="1800" y="329.5" width="148.70000000000005" height="6.5" fill="#e4c8d8"/><rect x="1800" y="336" width="148.70000000000005" height="6" fill="#dfb2c4"/><rect x="1800" y="342" width="148.70000000000005" height="2" fill="#ead4e2"/><rect x="1800" y="344" width="148.70000000000005" height="6" fill="#e2b4c2"/><rect x="1800" y="350" width="148.70000000000005" height="6" fill="#e6cad8"/><rect x="1800" y="356" width="148.70000000000005" height="6" fill="#e2bcd0"/><rect x="1800" y="362" width="148.70000000000005" height="6" fill="#e4c6d6"/><rect x="1800" y="368" width="148.70000000000005" height="4" fill="#dcaed2"/><rect x="1800" y="372" width="148.70000000000005" height="6" fill="#e2b6c6"/><rect x="1800" y="378" width="148.70000000000005" height="5" fill="#e6cad8"/><rect x="1800" y="383" width="148.70000000000005" height="5" fill="#cddccc"/><rect x="1800" y="388" width="148.70000000000005" height="5" fill="#daa8d4"/><rect x="1948.7" y="329.5" width="57.299999999999955" height="6.5" fill="#e4c8d8"/><rect x="1948.7" y="336" width="57.299999999999955" height="6" fill="#dfb2c4"/><rect x="1948.7" y="342" width="57.299999999999955" height="2" fill="#ead4e2"/><rect x="1948.7" y="344" width="57.299999999999955" height="2" fill="#e2b4c2"/><rect x="2003" y="329.5" width="4" height="6.5" fill="#e4c8d8"/><rect x="2003" y="336" width="4" height="6" fill="#dfb2c4"/><rect x="2003" y="342" width="4" height="2" fill="#ead4e2"/><rect x="2003" y="344" width="4" height="6" fill="#e2b4c2"/><rect x="2003" y="350" width="4" height="6" fill="#e6cad8"/><rect x="2003" y="356" width="4" height="6" fill="#e2bcd0"/><rect x="2003" y="362" width="4" height="6" fill="#e4c6d6"/><rect x="2003" y="368" width="4" height="4" fill="#dcaed2"/><rect x="2003" y="372" width="4" height="6" fill="#e2b6c6"/><rect x="2003" y="378" width="4" height="5" fill="#e6cad8"/><rect x="2003" y="383" width="4" height="5" fill="#cddccc"/><rect x="2003" y="388" width="4" height="5" fill="#daa8d4"/><rect x="2247" y="329.5" width="28" height="6.5" fill="#e4c8d8"/><rect x="2247" y="336" width="28" height="6" fill="#dfb2c4"/><rect x="2247" y="342" width="28" height="2" fill="#ead4e2"/><rect x="2247" y="344" width="28" height="6" fill="#e2b4c2"/><rect x="2247" y="350" width="28" height="6" fill="#e6cad8"/><rect x="2247" y="356" width="28" height="6" fill="#e2bcd0"/><rect x="2247" y="362" width="28" height="6" fill="#e4c6d6"/><rect x="2247" y="368" width="28" height="4" fill="#dcaed2"/><rect x="2247" y="372" width="28" height="6" fill="#e2b6c6"/><rect x="2247" y="378" width="28" height="5" fill="#e6cad8"/><rect x="2247" y="383" width="28" height="5" fill="#cddccc"/><rect x="2247" y="388" width="28" height="5" fill="#daa8d4"/><rect x="2275" y="329.5" width="123" height="6.5" fill="#e4c8d8"/><rect x="2275" y="336" width="123" height="6" fill="#dfb2c4"/><rect x="2275" y="342" width="123" height="2" fill="#ead4e2"/><rect x="2275" y="344" width="123" height="6" fill="#e2b4c2"/><rect x="2275" y="350" width="123" height="6" fill="#e6cad8"/><rect x="2275" y="356" width="123" height="6" fill="#e2bcd0"/><rect x="2275" y="362" width="123" height="6" fill="#e4c6d6"/><rect x="2275" y="368" width="123" height="4" fill="#dcaed2"/><rect x="2275" y="372" width="123" height="4" fill="#e2b6c6"/><rect x="2395" y="329.5" width="4" height="6.5" fill="#e4c8d8"/><rect x="2395" y="336" width="4" height="6" fill="#dfb2c4"/><rect x="2395" y="342" width="4" height="2" fill="#ead4e2"/><rect x="2395" y="344" width="4" height="6" fill="#e2b4c2"/><rect x="2395" y="350" width="4" height="6" fill="#e6cad8"/><rect x="2395" y="356" width="4" height="6" fill="#e2bcd0"/><rect x="2395" y="362" width="4" height="6" fill="#e4c6d6"/><rect x="2395" y="368" width="4" height="4" fill="#dcaed2"/><rect x="2395" y="372" width="4" height="6" fill="#e2b6c6"/><rect x="2395" y="378" width="4" height="5" fill="#e6cad8"/><rect x="2395" y="383" width="4" height="5" fill="#cddccc"/><rect x="2395" y="388" width="4" height="5" fill="#daa8d4"/><rect x="420.6" y="393" width="4" height="6" fill="#d8a8d0"/><rect x="420.6" y="399" width="4" height="6" fill="#e6c0d0"/><rect x="420.6" y="405" width="4" height="6" fill="#d4c8c0"/><rect x="420.6" y="411" width="4" height="1" fill="#dcaac4"/><rect x="484" y="393" width="4" height="6" fill="#e6c0d0"/><rect x="484" y="399" width="4" height="5" fill="#d4c8c0"/><rect x="524.6" y="393" width="4" height="6" fill="#d4c8c0"/><rect x="524.6" y="399" width="4" height="6" fill="#dcaac4"/><rect x="524.6" y="405" width="4" height="6" fill="#e0b4c8"/><rect x="524.6" y="411" width="4" height="1" fill="#d8a8d0"/><rect x="566" y="393" width="4" height="6" fill="#dcaac4"/><rect x="566" y="399" width="4" height="6" fill="#e0b4c8"/><rect x="566" y="405" width="4" height="6" fill="#d8a8d0"/><rect x="566" y="411" width="4" height="6" fill="#e6c0d0"/><rect x="566" y="417" width="4" height="6" fill="#d4c8c0"/><rect x="566" y="423" width="4" height="6" fill="#dcaac4"/><rect x="566" y="429" width="4" height="6" fill="#e0b4c8"/><rect x="566" y="435" width="4" height="2" fill="#d8a8d0"/><rect x="610.7" y="393" width="4" height="6" fill="#e0b4c8"/><rect x="610.7" y="399" width="4" height="6" fill="#d8a8d0"/><rect x="610.7" y="405" width="4" height="6" fill="#e6c0d0"/><rect x="610.7" y="411" width="4" height="4" fill="#d4c8c0"/><rect x="639.6" y="393" width="4" height="6" fill="#d8a8d0"/><rect x="639.6" y="399" width="4" height="6" fill="#e6c0d0"/><rect x="639.6" y="405" width="4" height="6" fill="#d4c8c0"/><rect x="639.6" y="411" width="4" height="4" fill="#dcaac4"/><rect x="663" y="393" width="4" height="6" fill="#e6c0d0"/><rect x="663" y="399" width="4" height="6" fill="#d4c8c0"/><rect x="663" y="405" width="4" height="1" fill="#dcaac4"/><rect x="672.8" y="393" width="4" height="6" fill="#d4c8c0"/><rect x="672.8" y="399" width="4" height="6" fill="#dcaac4"/><rect x="672.8" y="405" width="4" height="4" fill="#e0b4c8"/><rect x="713.5" y="393" width="4" height="6" fill="#dcaac4"/><rect x="713.5" y="399" width="4" height="6" fill="#e0b4c8"/><rect x="713.5" y="405" width="4" height="6" fill="#d8a8d0"/><rect x="713.5" y="411" width="4" height="4" fill="#e6c0d0"/><rect x="734" y="393" width="4" height="6" fill="#e0b4c8"/><rect x="734" y="399" width="4" height="6" fill="#d8a8d0"/><rect x="734" y="405" width="4" height="4" fill="#e6c0d0"/><rect x="748" y="393" width="4" height="6" fill="#d8a8d0"/><rect x="748" y="399" width="4" height="6" fill="#e6c0d0"/><rect x="748" y="405" width="4" height="6" fill="#d4c8c0"/><rect x="748" y="411" width="4" height="6" fill="#dcaac4"/><rect x="748" y="417" width="4" height="6" fill="#e0b4c8"/><rect x="748" y="423" width="4" height="6" fill="#d8a8d0"/><rect x="748" y="429" width="4" height="6" fill="#e6c0d0"/><rect x="748" y="435" width="4" height="6" fill="#d4c8c0"/><rect x="748" y="441" width="4" height="2" fill="#dcaac4"/><rect x="785" y="393" width="4" height="6" fill="#e6c0d0"/><rect x="785" y="399" width="4" height="6" fill="#d4c8c0"/><rect x="785" y="405" width="4" height="1" fill="#dcaac4"/><rect x="813.5" y="393" width="4" height="6" fill="#d4c8c0"/><rect x="813.5" y="399" width="4" height="6" fill="#dcaac4"/><rect x="813.5" y="405" width="4" height="6" fill="#e0b4c8"/><rect x="813.5" y="411" width="4" height="4" fill="#d8a8d0"/><rect x="863" y="393" width="4" height="6" fill="#dcaac4"/><rect x="863" y="399" width="4" height="6" fill="#e0b4c8"/><rect x="863" y="405" width="4" height="6" fill="#d8a8d0"/><rect x="863" y="411" width="4" height="1" fill="#e6c0d0"/><rect x="875.5" y="393" width="4" height="6" fill="#e0b4c8"/><rect x="875.5" y="399" width="4" height="6" fill="#d8a8d0"/><rect x="875.5" y="405" width="4" height="4" fill="#e6c0d0"/><rect x="893" y="393" width="4" height="6" fill="#d8a8d0"/><rect x="893" y="399" width="4" height="6" fill="#e6c0d0"/><rect x="893" y="405" width="4" height="6" fill="#d4c8c0"/><rect x="893" y="411" width="4" height="6" fill="#dcaac4"/><rect x="893" y="417" width="4" height="6" fill="#e0b4c8"/><rect x="893" y="423" width="4" height="6" fill="#d8a8d0"/><rect x="893" y="429" width="4" height="6" fill="#e6c0d0"/><rect x="893" y="435" width="4" height="6" fill="#d4c8c0"/><rect x="893" y="441" width="4" height="5" fill="#dcaac4"/><rect x="908" y="393" width="4" height="6" fill="#e6c0d0"/><rect x="908" y="399" width="4" height="6" fill="#d4c8c0"/><rect x="908" y="405" width="4" height="6" fill="#dcaac4"/><rect x="908" y="411" width="4" height="6" fill="#e0b4c8"/><rect x="908" y="417" width="4" height="6" fill="#d8a8d0"/><rect x="908" y="423" width="4" height="6" fill="#e6c0d0"/><rect x="908" y="429" width="4" height="6" fill="#d4c8c0"/><rect x="908" y="435" width="4" height="6" fill="#dcaac4"/><rect x="908" y="441" width="4" height="5" fill="#e0b4c8"/><rect x="917.5" y="393" width="4" height="6" fill="#d4c8c0"/><rect x="917.5" y="399" width="4" height="6" fill="#dcaac4"/><rect x="917.5" y="405" width="4" height="6" fill="#e0b4c8"/><rect x="917.5" y="411" width="4" height="6" fill="#d8a8d0"/><rect x="917.5" y="417" width="4" height="6" fill="#e6c0d0"/><rect x="917.5" y="423" width="4" height="3" fill="#d4c8c0"/><rect x="1028" y="393" width="4" height="6" fill="#dcaac4"/><rect x="1028" y="399" width="4" height="3" fill="#e0b4c8"/><rect x="1095.8" y="393" width="4" height="6" fill="#e0b4c8"/><rect x="1095.8" y="399" width="4" height="6" fill="#d8a8d0"/><rect x="1095.8" y="405" width="4" height="6" fill="#e6c0d0"/><rect x="1095.8" y="411" width="4" height="6" fill="#d4c8c0"/><rect x="1095.8" y="417" width="4" height="6" fill="#dcaac4"/><rect x="1095.8" y="423" width="4" height="6" fill="#e0b4c8"/><rect x="1095.8" y="429" width="4" height="6" fill="#d8a8d0"/><rect x="1095.8" y="435" width="4" height="6" fill="#e6c0d0"/><rect x="1095.8" y="441" width="4" height="3" fill="#d4c8c0"/><rect x="1121" y="393" width="4" height="6" fill="#d8a8d0"/><rect x="1121" y="399" width="4" height="6" fill="#e6c0d0"/><rect x="1121" y="405" width="4" height="6" fill="#d4c8c0"/><rect x="1121" y="411" width="4" height="6" fill="#dcaac4"/><rect x="1121" y="417" width="4" height="6" fill="#e0b4c8"/><rect x="1121" y="423" width="4" height="6" fill="#d8a8d0"/><rect x="1121" y="429" width="4" height="6" fill="#e6c0d0"/><rect x="1121" y="435" width="4" height="6" fill="#d4c8c0"/><rect x="1121" y="441" width="4" height="5" fill="#dcaac4"/><rect x="1136.8" y="393" width="4" height="6" fill="#e6c0d0"/><rect x="1136.8" y="399" width="4" height="6" fill="#d4c8c0"/><rect x="1136.8" y="405" width="4" height="6" fill="#dcaac4"/><rect x="1136.8" y="411" width="4" height="6" fill="#e0b4c8"/><rect x="1136.8" y="417" width="4" height="6" fill="#d8a8d0"/><rect x="1136.8" y="423" width="4" height="6" fill="#e6c0d0"/><rect x="1136.8" y="429" width="4" height="6" fill="#d4c8c0"/><rect x="1136.8" y="435" width="4" height="6" fill="#dcaac4"/><rect x="1136.8" y="441" width="4" height="6" fill="#e0b4c8"/><rect x="1136.8" y="447" width="4" height="5" fill="#d8a8d0"/><rect x="1158" y="393" width="4" height="6" fill="#d4c8c0"/><rect x="1158" y="399" width="4" height="6" fill="#dcaac4"/><rect x="1158" y="405" width="4" height="5" fill="#e0b4c8"/><rect x="1220" y="393" width="4" height="6" fill="#dcaac4"/><rect x="1220" y="399" width="4" height="6" fill="#e0b4c8"/><rect x="1220" y="405" width="4" height="6" fill="#d8a8d0"/><rect x="1220" y="411" width="4" height="6" fill="#e6c0d0"/><rect x="1220" y="417" width="4" height="6" fill="#d4c8c0"/><rect x="1220" y="423" width="4" height="6" fill="#dcaac4"/><rect x="1220" y="429" width="4" height="6" fill="#e0b4c8"/><rect x="1220" y="435" width="4" height="6" fill="#d8a8d0"/><rect x="1220" y="441" width="4" height="3" fill="#e6c0d0"/><rect x="1248.6" y="393" width="4" height="6" fill="#e0b4c8"/><rect x="1248.6" y="399" width="4" height="6" fill="#d8a8d0"/><rect x="1248.6" y="405" width="4" height="5" fill="#e6c0d0"/><rect x="1265" y="393" width="4" height="6" fill="#d8a8d0"/><rect x="1265" y="399" width="4" height="6" fill="#e6c0d0"/><rect x="1265" y="405" width="4" height="6" fill="#d4c8c0"/><rect x="1265" y="411" width="4" height="6" fill="#dcaac4"/><rect x="1265" y="417" width="4" height="6" fill="#e0b4c8"/><rect x="1265" y="423" width="4" height="4" fill="#d8a8d0"/><rect x="1290" y="393" width="4" height="6" fill="#e6c0d0"/><rect x="1290" y="399" width="4" height="6" fill="#d4c8c0"/><rect x="1290" y="405" width="4" height="6" fill="#dcaac4"/><rect x="1290" y="411" width="4" height="6" fill="#e0b4c8"/><rect x="1290" y="417" width="4" height="6" fill="#d8a8d0"/><rect x="1290" y="423" width="4" height="6" fill="#e6c0d0"/><rect x="1290" y="429" width="4" height="6" fill="#d4c8c0"/><rect x="1290" y="435" width="4" height="6" fill="#dcaac4"/><rect x="1290" y="441" width="4" height="3" fill="#e0b4c8"/><rect x="1298" y="393" width="4" height="6" fill="#d4c8c0"/><rect x="1298" y="399" width="4" height="6" fill="#dcaac4"/><rect x="1298" y="405" width="4" height="6" fill="#e0b4c8"/><rect x="1298" y="411" width="4" height="6" fill="#d8a8d0"/><rect x="1298" y="417" width="4" height="3" fill="#e6c0d0"/><rect x="1306.6" y="393" width="4" height="6" fill="#dcaac4"/><rect x="1306.6" y="399" width="4" height="6" fill="#e0b4c8"/><rect x="1306.6" y="405" width="4" height="6" fill="#d8a8d0"/><rect x="1306.6" y="411" width="4" height="6" fill="#e6c0d0"/><rect x="1306.6" y="417" width="4" height="6" fill="#d4c8c0"/><rect x="1306.6" y="423" width="4" height="6" fill="#dcaac4"/><rect x="1306.6" y="429" width="4" height="6" fill="#e0b4c8"/><rect x="1306.6" y="435" width="4" height="6" fill="#d8a8d0"/><rect x="1306.6" y="441" width="4" height="6" fill="#e6c0d0"/><rect x="1306.6" y="447" width="4" height="5" fill="#d4c8c0"/><rect x="1319" y="393" width="4" height="6" fill="#e0b4c8"/><rect x="1319" y="399" width="4" height="6" fill="#d8a8d0"/><rect x="1319" y="405" width="4" height="1" fill="#e6c0d0"/><rect x="1385.5" y="393" width="4" height="6" fill="#d8a8d0"/><rect x="1385.5" y="399" width="4" height="6" fill="#e6c0d0"/><rect x="1385.5" y="405" width="4" height="6" fill="#d4c8c0"/><rect x="1385.5" y="411" width="4" height="6" fill="#dcaac4"/><rect x="1385.5" y="417" width="4" height="6" fill="#e0b4c8"/><rect x="1385.5" y="423" width="4" height="6" fill="#d8a8d0"/><rect x="1385.5" y="429" width="4" height="6" fill="#e6c0d0"/><rect x="1385.5" y="435" width="4" height="6" fill="#d4c8c0"/><rect x="1385.5" y="441" width="4" height="6" fill="#dcaac4"/><rect x="1385.5" y="447" width="4" height="2" fill="#e0b4c8"/><rect x="1400.7" y="393" width="4" height="6" fill="#e6c0d0"/><rect x="1400.7" y="399" width="4" height="6" fill="#d4c8c0"/><rect x="1400.7" y="405" width="4" height="4" fill="#dcaac4"/><rect x="1462.8" y="393" width="4" height="6" fill="#d4c8c0"/><rect x="1462.8" y="399" width="4" height="6" fill="#dcaac4"/><rect x="1462.8" y="405" width="4" height="1" fill="#e0b4c8"/><rect x="1481" y="393" width="4" height="6" fill="#dcaac4"/><rect x="1481" y="399" width="4" height="6" fill="#e0b4c8"/><rect x="1481" y="405" width="4" height="4" fill="#d8a8d0"/><rect x="1513.5" y="393" width="4" height="6" fill="#e0b4c8"/><rect x="1513.5" y="399" width="4" height="6" fill="#d8a8d0"/><rect x="1513.5" y="405" width="4" height="6" fill="#e6c0d0"/><rect x="1513.5" y="411" width="4" height="4" fill="#d4c8c0"/><rect x="1600.4" y="393" width="4" height="6" fill="#d8a8d0"/><rect x="1600.4" y="399" width="4" height="5" fill="#e6c0d0"/><rect x="1617.5" y="393" width="4" height="6" fill="#e6c0d0"/><rect x="1617.5" y="399" width="4" height="6" fill="#d4c8c0"/><rect x="1617.5" y="405" width="4" height="6" fill="#dcaac4"/><rect x="1617.5" y="411" width="4" height="4" fill="#e0b4c8"/><rect x="1662.5" y="393" width="4" height="6" fill="#d4c8c0"/><rect x="1662.5" y="399" width="4" height="6" fill="#dcaac4"/><rect x="1662.5" y="405" width="4" height="5" fill="#e0b4c8"/><rect x="1675.6" y="393" width="4" height="6" fill="#dcaac4"/><rect x="1675.6" y="399" width="4" height="6" fill="#e0b4c8"/><rect x="1675.6" y="405" width="4" height="4" fill="#d8a8d0"/><rect x="1695.8" y="393" width="4" height="6" fill="#e0b4c8"/><rect x="1695.8" y="399" width="4" height="6" fill="#d8a8d0"/><rect x="1695.8" y="405" width="4" height="6" fill="#e6c0d0"/><rect x="1695.8" y="411" width="4" height="6" fill="#d4c8c0"/><rect x="1695.8" y="417" width="4" height="6" fill="#dcaac4"/><rect x="1695.8" y="423" width="4" height="6" fill="#e0b4c8"/><rect x="1695.8" y="429" width="4" height="6" fill="#d8a8d0"/><rect x="1695.8" y="435" width="4" height="6" fill="#e6c0d0"/><rect x="1695.8" y="441" width="4" height="6" fill="#d4c8c0"/><rect x="1695.8" y="447" width="4" height="6" fill="#dcaac4"/><rect x="1695.8" y="453" width="4" height="6" fill="#e0b4c8"/><rect x="1695.8" y="459" width="4" height="6" fill="#d8a8d0"/><rect x="1695.8" y="465" width="4" height="6" fill="#e6c0d0"/><rect x="1795.5" y="393" width="4" height="6" fill="#d8a8d0"/><rect x="1795.5" y="399" width="4" height="6" fill="#e6c0d0"/><rect x="1795.5" y="405" width="4" height="6" fill="#d4c8c0"/><rect x="1795.5" y="411" width="4" height="6" fill="#dcaac4"/><rect x="1795.5" y="417" width="4" height="6" fill="#e0b4c8"/><rect x="1795.5" y="423" width="4" height="6" fill="#d8a8d0"/><rect x="1795.5" y="429" width="4" height="6" fill="#e6c0d0"/><rect x="1795.5" y="435" width="4" height="6" fill="#d4c8c0"/><rect x="1795.5" y="441" width="4" height="3" fill="#dcaac4"/><rect x="1808" y="393" width="4" height="6" fill="#e6c0d0"/><rect x="1808" y="399" width="4" height="6" fill="#d4c8c0"/><rect x="1808" y="405" width="4" height="6" fill="#dcaac4"/><rect x="1808" y="411" width="4" height="6" fill="#e0b4c8"/><rect x="1808" y="417" width="4" height="6" fill="#d8a8d0"/><rect x="1808" y="423" width="4" height="6" fill="#e6c0d0"/><rect x="1808" y="429" width="4" height="6" fill="#d4c8c0"/><rect x="1808" y="435" width="4" height="6" fill="#dcaac4"/><rect x="1808" y="441" width="4" height="3" fill="#e0b4c8"/><rect x="2118.4" y="330" width="4" height="6" fill="#e0b4c8"/><rect x="2118.4" y="336" width="4" height="6" fill="#d8a8d0"/><rect x="2118.4" y="342" width="4" height="6" fill="#e6c0d0"/><rect x="2118.4" y="348" width="4" height="6" fill="#d4c8c0"/><rect x="2118.4" y="354" width="4" height="6" fill="#dcaac4"/><rect x="2118.4" y="360" width="4" height="6" fill="#e0b4c8"/><rect x="2118.4" y="366" width="4" height="6" fill="#d8a8d0"/><rect x="2118.4" y="372" width="4" height="6" fill="#e6c0d0"/><rect x="2118.4" y="378" width="4" height="5" fill="#d4c8c0"/><rect x="2316" y="376" width="4" height="6" fill="#e0b4c8"/><rect x="2316" y="382" width="4" height="6" fill="#d8a8d0"/><rect x="2316" y="388" width="4" height="6" fill="#e6c0d0"/><rect x="2316" y="394" width="4" height="6" fill="#d4c8c0"/><rect x="2316" y="400" width="4" height="6" fill="#dcaac4"/><rect x="2316" y="406" width="4" height="6" fill="#e0b4c8"/><rect x="2316" y="412" width="4" height="6" fill="#d8a8d0"/><rect x="2316" y="418" width="4" height="6" fill="#e6c0d0"/><rect x="2316" y="424" width="4" height="6" fill="#d4c8c0"/><rect x="2316" y="430" width="4" height="6" fill="#dcaac4"/><rect x="2316" y="436" width="4" height="6" fill="#e0b4c8"/><rect x="2316" y="442" width="4" height="4" fill="#d8a8d0"/><rect x="2834" y="329.5" width="4" height="6" fill="#e0b4c8"/><rect x="2834" y="335.5" width="4" height="6" fill="#d8a8d0"/><rect x="2834" y="341.5" width="4" height="6" fill="#e6c0d0"/><rect x="2834" y="347.5" width="4" height="6" fill="#d4c8c0"/><rect x="2834" y="353.5" width="4" height="6" fill="#dcaac4"/><rect x="2834" y="359.5" width="4" height="5.5" fill="#e0b4c8"/></g></g><rect x="140.5" y="318.5" width="227" height="45.5" fill="none" stroke="#a8a0a6" stroke-width="1.5"/></svg>
<div class="b" style="left:140px;top:505.5px;width:2882px;height:39.5px;background:linear-gradient(#ece4ea 0,#fbf6fa 2px,#fbf8fb 34px,#fff 35px);"></div>
<div class="m" style="right:2656.3px;top:514.8px;font-size:22.5px;color:#1f1b2d;transform:scaleX(0.915);transform-origin:100% 50%;">50.00ms</div>
<div class="m" style="right:2418.1px;top:514.8px;font-size:22.5px;color:#1f1b2d;transform:scaleX(0.915);transform-origin:100% 50%;">100.00ms</div>
<div class="m" style="right:2179.9px;top:514.8px;font-size:22.5px;color:#1f1b2d;transform:scaleX(0.915);transform-origin:100% 50%;">150.00ms</div>
<div class="m" style="right:1941.7px;top:514.8px;font-size:22.5px;color:#1f1b2d;transform:scaleX(0.915);transform-origin:100% 50%;">200.00ms</div>
<div class="m" style="right:1703.5px;top:514.8px;font-size:22.5px;color:#1f1b2d;transform:scaleX(0.915);transform-origin:100% 50%;">250.00ms</div>
<div class="m" style="right:1465.3px;top:514.8px;font-size:22.5px;color:#1f1b2d;transform:scaleX(0.915);transform-origin:100% 50%;">300.00ms</div>
<div class="m" style="right:1227.1000000000001px;top:514.8px;font-size:22.5px;color:#1f1b2d;transform:scaleX(0.915);transform-origin:100% 50%;">350.00ms</div>
<div class="m" style="right:988.9000000000001px;top:514.8px;font-size:22.5px;color:#1f1b2d;transform:scaleX(0.915);transform-origin:100% 50%;">400.00ms</div>
<div class="m" style="right:750.7000000000003px;top:514.8px;font-size:22.5px;color:#1f1b2d;transform:scaleX(0.915);transform-origin:100% 50%;">450.00ms</div>
<div class="m" style="right:512.5000000000005px;top:514.8px;font-size:22.5px;color:#1f1b2d;transform:scaleX(0.915);transform-origin:100% 50%;">500.00ms</div>
<div class="m" style="right:274.3000000000002px;top:514.8px;font-size:22.5px;color:#1f1b2d;transform:scaleX(0.915);transform-origin:100% 50%;">550.00ms</div>
<div class="m" style="right:36.100000000000364px;top:514.8px;font-size:22.5px;color:#1f1b2d;transform:scaleX(0.915);transform-origin:100% 50%;">600.00ms</div>
<div class="b" style="left:140px;top:545px;width:2882px;height:661px;overflow:hidden;">
<style>.fb{position:absolute;box-sizing:border-box;overflow:hidden;white-space:nowrap;font-family:"Liberation Mono",monospace;font-size:22px;line-height:1.1328;color:#1f1b2d;}</style>
<div style="position:absolute;left:-140px;top:-545px;width:3022px;height:1660px;">
<div class="fb" style="left:141px;top:545px;width:2881px;height:35px;background:#f8dae4;"><span style="position:absolute;left:8px;top:6.7px">-[UIApplication _run]</span></div>
<div class="fb" style="left:141px;top:582px;width:2881px;height:38px;background:#f3b8dc;"><span style="position:absolute;left:8px;top:9.7px">GSEventRunModal</span></div>
<div class="fb" style="left:141px;top:622px;width:2881px;height:38px;background:#f1c3ee;"><span style="position:absolute;left:8px;top:9.7px">CFRunLoopRunSpecific</span></div>
<div class="fb" style="left:141px;top:662px;width:2881px;height:38px;background:#f8e0e6;"><span style="position:absolute;left:8px;top:9.7px">__CFRunLoopRun</span></div>
<div class="fb" style="left:141px;top:702px;width:260px;height:38px;background:#f6c5c6;"><span style="position:absolute;left:8px;top:9.7px">__CFRunLo…Sources0</span></div>
<div class="fb" style="left:141px;top:742px;width:260px;height:38px;background:#f5cddc;"><span style="position:absolute;left:8px;top:9.7px">__CFRunLo…oSource0</span></div>
<div class="fb" style="left:141px;top:782px;width:260px;height:38px;background:#f3d0ee;"><span style="position:absolute;left:8px;top:9.7px">__CFRUNLO…NCTION__</span></div>
<div class="fb" style="left:141px;top:822px;width:260px;height:38px;background:#f3cbe6;"><span style="position:absolute;left:8px;top:9.7px">runloopSo…Callback</span></div>
<div class="fb" style="left:141px;top:862px;width:260px;height:38px;background:#f9e7f3;"><span style="position:absolute;left:8px;top:9.7px">scheduler…nSection</span></div>
<div class="fb" style="left:141px;top:902px;width:260px;height:38px;background:#f5c2dc;"><span style="position:absolute;left:8px;top:9.7px">_UIUpdate…uenceRun</span></div>
<div class="fb" style="left:141px;top:942px;width:102.5px;height:38px;background:#efb6e6;"><span style="position:absolute;left:8px;top:9.7px">_UI…on</span></div>
<div class="fb" style="left:299px;top:942px;width:101.5px;height:38px;background:#efb6e6;"><span style="position:absolute;left:8px;top:9.7px">_UI…on</span></div>
<div class="fb" style="left:141px;top:982px;width:102.5px;height:38px;background:#fbe8e2;"><span style="position:absolute;left:8px;top:9.7px">CA:…l)</span></div>
<div class="fb" style="left:299px;top:982px;width:101.5px;height:38px;background:#fbe8e2;"><span style="position:absolute;left:8px;top:9.7px">CA:…l)</span></div>
<div class="fb" style="left:141px;top:1022px;width:102.5px;height:38px;background:#f6d3e3;"><span style="position:absolute;left:8px;top:9.7px">CA:…()</span></div>
<div class="fb" style="left:299px;top:1022px;width:101.5px;height:38px;background:#f6d3e3;"><span style="position:absolute;left:8px;top:9.7px">CA:…()</span></div>
<div class="fb" style="left:141px;top:1062px;width:102.5px;height:38px;background:#f6c0cc;"><span style="position:absolute;left:8px;top:9.7px">CA:…*)</span></div>
<div class="fb" style="left:299px;top:1062px;width:101.5px;height:38px;background:#f6c0cc;"><span style="position:absolute;left:8px;top:9.7px">CA:…*)</span></div>
<div class="fb" style="left:141px;top:1102px;width:102.5px;height:38px;background:#f5c6d4;"><span style="position:absolute;left:8px;top:9.7px">CA:…*)</span></div>
<div class="fb" style="left:299px;top:1102px;width:101.5px;height:38px;background:#f5c6d4;"><span style="position:absolute;left:8px;top:9.7px">CA:…*)</span></div>
<div class="fb" style="left:141px;top:1142px;width:102.5px;height:38px;background:#efb8ea;"><span style="position:absolute;left:8px;top:9.7px">CA:…*)</span></div>
<div class="fb" style="left:299px;top:1142px;width:101.5px;height:38px;background:#efb8ea;"><span style="position:absolute;left:8px;top:9.7px">CA:…*)</span></div>
<div class="fb" style="left:141px;top:1182px;width:102.5px;height:24px;background:#fbe8ee;"><span style="position:absolute;left:8px;top:9.7px">-[U…:]</span></div>
<div class="fb" style="left:299px;top:1182px;width:101.5px;height:24px;background:#fbe8ee;"><span style="position:absolute;left:8px;top:9.7px">-[U…:]</span></div>
<div class="fb" style="left:246px;top:942px;width:51px;height:38px;background:#f6d2ee;"><span style="position:absolute;left:8px;top:9.7px">u…</span></div>
<div class="fb" style="left:246px;top:982px;width:51px;height:38px;background:#f5c8cf;"><span style="position:absolute;left:8px;top:9.7px">_…</span></div>
<div class="fb" style="left:246px;top:1022px;width:51px;height:38px;background:#fbe8ea;"><span style="position:absolute;left:8px;top:9.7px">_…</span></div>
<div class="fb" style="left:246px;top:1062px;width:51px;height:38px;background:#fbe4ea;"><span style="position:absolute;left:8px;top:9.7px">-…</span></div>
<div class="fb" style="left:246px;top:1102px;width:51px;height:38px;background:#f8dce4;"><span style="position:absolute;left:8px;top:9.7px">-…</span></div>
<div class="fb" style="left:246px;top:1142px;width:51px;height:38px;background:#f7d8e8;"><span style="position:absolute;left:8px;top:9.7px">-…</span></div>
<div class="fb" style="left:246px;top:1182px;width:51px;height:24px;background:#f5c8d0;"><span style="position:absolute;left:8px;top:9.7px">-</span></div>
<div class="fb" style="left:403px;top:702px;width:50px;height:38px;background:#f9e6f3;"><span style="position:absolute;left:8px;top:9.7px">_…</span></div>
<div class="fb" style="left:403px;top:742px;width:50px;height:38px;background:#f8e0f0;"><span style="position:absolute;left:8px;top:9.7px">_…</span></div>
<div class="fb" style="left:403px;top:782px;width:50px;height:38px;background:#f4c4da;"><span style="position:absolute;left:8px;top:9.7px">_…</span></div>
<div class="fb" style="left:403px;top:822px;width:50px;height:38px;background:#f4d4ea;"><span style="position:absolute;left:8px;top:9.7px">_…</span></div>
<div class="fb" style="left:403px;top:862px;width:50px;height:38px;background:#f5bed2;"><span style="position:absolute;left:8px;top:9.7px">_…</span></div>
<div class="fb" style="left:403px;top:902px;width:50px;height:38px;background:#f5c8dc;"><span style="position:absolute;left:8px;top:9.7px">_…</span></div>
<div class="fb" style="left:403px;top:942px;width:50px;height:38px;background:#f6bcc4;"><span style="position:absolute;left:8px;top:9.7px">-…</span></div>
<div class="fb" style="left:403px;top:982px;width:50px;height:38px;background:#f5d4ea;"><span style="position:absolute;left:8px;top:9.7px">-…</span></div>
<div class="fb" style="left:403px;top:1022px;width:50px;height:38px;background:#f9e6e8;"><span style="position:absolute;left:8px;top:9.7px">_…</span></div>
<div class="fb" style="left:403px;top:1062px;width:50px;height:38px;background:#f5d4ea;"><span style="position:absolute;left:8px;top:9.7px">-…</span></div>
<div class="fb" style="left:403px;top:1102px;width:50px;height:38px;background:#f2c8e4;"><span style="position:absolute;left:8px;top:9.7px">-…</span></div>
<div class="fb" style="left:403px;top:1142px;width:50px;height:38px;background:#f9e0e4;"><span style="position:absolute;left:8px;top:9.7px">-…</span></div>
<div class="fb" style="left:403px;top:1182px;width:50px;height:24px;background:#f2d0f0;"><span style="position:absolute;left:8px;top:9.7px">-</span></div>
<div class="fb" style="left:455px;top:702px;width:50px;height:38px;background:#f6c5c6;"><span style="position:absolute;left:8px;top:9.7px">_…</span></div>
<div class="fb" style="left:455px;top:742px;width:50px;height:38px;background:#f5cddc;"><span style="position:absolute;left:8px;top:9.7px">_…</span></div>
<div class="fb" style="left:455px;top:782px;width:50px;height:38px;background:#f3d0ee;"><span style="position:absolute;left:8px;top:9.7px">_…</span></div>
<div class="fb" style="left:455px;top:822px;width:50px;height:38px;background:#f3cbe6;"><span style="position:absolute;left:8px;top:9.7px">r…</span></div>
<div class="fb" style="left:455px;top:862px;width:50px;height:38px;background:#f9e7f3;"><span style="position:absolute;left:8px;top:9.7px">s…</span></div>
<div class="fb" style="left:455px;top:902px;width:50px;height:38px;background:#f5c2dc;"><span style="position:absolute;left:8px;top:9.7px">_…</span></div>
<div class="fb" style="left:455px;top:942px;width:50px;height:38px;background:#efb6e6;"><span style="position:absolute;left:8px;top:9.7px">_…</span></div>
<div class="fb" style="left:455px;top:982px;width:50px;height:38px;background:#fae6e6;"><span style="position:absolute;left:8px;top:9.7px">C…</span></div>
<div class="fb" style="left:455px;top:1022px;width:50px;height:38px;background:#f6d3e3;"><span style="position:absolute;left:8px;top:9.7px">C…</span></div>
<div class="fb" style="left:455px;top:1062px;width:50px;height:38px;background:#f6c0cc;"><span style="position:absolute;left:8px;top:9.7px">C…</span></div>
<div class="fb" style="left:455px;top:1102px;width:50px;height:38px;background:#f5c6d4;"><span style="position:absolute;left:8px;top:9.7px">C…</span></div>
<div class="fb" style="left:455px;top:1142px;width:50px;height:38px;background:#efb8ea;"><span style="position:absolute;left:8px;top:9.7px">C…</span></div>
<div class="fb" style="left:455px;top:1182px;width:50px;height:24px;background:#fbe8ee;"><span style="position:absolute;left:8px;top:9.7px">-</span></div>
<div class="fb" style="left:507px;top:702px;width:1255.5px;height:38px;background:#f9e4f3;"><span style="position:absolute;left:8px;top:9.7px">__CFRUNLOOP_IS_SERVICING_THE_MAIN_DISPATCH_QUEUE__</span></div>
<div class="fb" style="left:507px;top:742px;width:1255.5px;height:38px;background:#f7def0;"><span style="position:absolute;left:8px;top:9.7px">_dispatch_main_queue_callback_4CF</span></div>
<div class="fb" style="left:507px;top:782px;width:1255.5px;height:38px;background:#f5c4dc;"><span style="position:absolute;left:8px;top:9.7px">_dispatch_main_queue_drain</span></div>
<div class="fb" style="left:507px;top:822px;width:1255.5px;height:38px;background:#f5d2ea;"><span style="position:absolute;left:8px;top:9.7px">_dispatch_client_callout</span></div>
<div class="fb" style="left:507px;top:862px;width:1255.5px;height:38px;background:#f4bcd2;"><span style="position:absolute;left:8px;top:9.7px">_dispatch_call_block_and_release</span></div>
<div class="fb" style="left:507px;top:902px;width:1255.5px;height:38px;background:#f6c6dc;"><span style="position:absolute;left:8px;top:9.7px">___UIUpdateCycleNotifyIdle_block_invoke</span></div>
<div class="fb" style="left:507px;top:942px;width:49.700000000000045px;height:38px;background:#f6bcc4;"><span style="position:absolute;left:8px;top:9.7px">-…</span></div>
<div class="fb" style="left:507px;top:982px;width:49.700000000000045px;height:38px;background:#f5d4ea;"><span style="position:absolute;left:8px;top:9.7px">-…</span></div>
<div class="fb" style="left:507px;top:1022px;width:49.700000000000045px;height:38px;background:#f9e6e8;"><span style="position:absolute;left:8px;top:9.7px">_…</span></div>
<div class="fb" style="left:507px;top:1062px;width:49.700000000000045px;height:38px;background:#f5d4ea;"><span style="position:absolute;left:8px;top:9.7px">-…</span></div>
<div class="fb" style="left:507px;top:1102px;width:49.700000000000045px;height:38px;background:#f2c8e4;"><span style="position:absolute;left:8px;top:9.7px">-…</span></div>
<div class="fb" style="left:507px;top:1142px;width:49.700000000000045px;height:38px;background:#f9e0e4;"><span style="position:absolute;left:8px;top:9.7px">-…</span></div>
<div class="fb" style="left:507px;top:1182px;width:49.700000000000045px;height:24px;background:#f2d0f0;"><span style="position:absolute;left:8px;top:9.7px">-</span></div>
<div class="fb" style="left:612.4px;top:942px;width:50.10000000000002px;height:38px;background:#f5d4e6;"><span style="position:absolute;left:8px;top:9.7px">C…</span></div>
<div class="fb" style="left:612.4px;top:982px;width:50.10000000000002px;height:38px;background:#f5bccf;"><span style="position:absolute;left:8px;top:9.7px">C…</span></div>
<div class="fb" style="left:612.4px;top:1022px;width:50.10000000000002px;height:38px;background:#f5bccf;"><span style="position:absolute;left:8px;top:9.7px">C…</span></div>
<div class="fb" style="left:612.4px;top:1062px;width:50.10000000000002px;height:38px;background:#efcfb8;"><span style="position:absolute;left:8px;top:9.7px">-…</span></div>
<div class="fb" style="left:612.4px;top:1102px;width:50.10000000000002px;height:38px;background:#f5d0ec;"><span style="position:absolute;left:8px;top:9.7px">i…</span></div>
<div class="fb" style="left:612.4px;top:1142px;width:50.10000000000002px;height:38px;background:#f5cce0;"><span style="position:absolute;left:8px;top:9.7px">C…</span></div>
<div class="fb" style="left:612.4px;top:1182px;width:50.10000000000002px;height:24px;background:#f8dff0;"><span style="position:absolute;left:8px;top:9.7px">C</span></div>
<div class="fb" style="left:665px;top:942px;width:1097.5px;height:38px;background:#f6bac2;"><span style="position:absolute;left:8px;top:9.7px">-[UITableView _updateCycleIdleUntil:]</span></div>
<div class="fb" style="left:665px;top:982px;width:1097.5px;height:38px;background:#f5d6ec;"><span style="position:absolute;left:8px;top:9.7px">-[_UITableViewPrefetchContext updateVisibleIndexRange:withContentOffset:]</span></div>
<div class="fb" style="left:665px;top:1022px;width:1097.5px;height:38px;background:#f9e4e6;"><span style="position:absolute;left:8px;top:9.7px">__48-[UITableView _configureCellPrefetchingHandlers]_block_invoke</span></div>
<div class="fb" style="left:665px;top:1062px;width:1097.5px;height:38px;background:#f5d4ea;"><span style="position:absolute;left:8px;top:9.7px">-[UITableView _prefetchCellAtGlobalRow:aboveVisibleRange:]</span></div>
<div class="fb" style="left:665px;top:1102px;width:1097.5px;height:38px;background:#f3c6e4;"><span style="position:absolute;left:8px;top:9.7px">-[UITableViewRowData rectForGlobalRow:heightCanBeGuessed:]</span></div>
<div class="fb" style="left:665px;top:1142px;width:1097.5px;height:38px;background:#f9dfe4;"><span style="position:absolute;left:8px;top:9.7px">-[UITableViewRowData rectForRow:inSection:heightCanBeGuessed:]</span></div>
<div class="fb" style="left:665px;top:1182px;width:1097.5px;height:24px;background:#f2d0f0;"><span style="position:absolute;left:8px;top:9.7px">-[UITableViewRowData heightForRow:inSection:canGuess:adjustForReorderedRow:]</span></div>
<div class="fb" style="left:2027px;top:702px;width:50.69999999999982px;height:38px;background:#f6c5c6;"><span style="position:absolute;left:8px;top:9.7px">_…</span></div>
<div class="fb" style="left:2027px;top:742px;width:50.69999999999982px;height:38px;background:#f5cddc;"><span style="position:absolute;left:8px;top:9.7px">_…</span></div>
<div class="fb" style="left:2027px;top:782px;width:50.69999999999982px;height:38px;background:#f3d0ee;"><span style="position:absolute;left:8px;top:9.7px">_…</span></div>
<div class="fb" style="left:2027px;top:822px;width:50.69999999999982px;height:38px;background:#f3cbe6;"><span style="position:absolute;left:8px;top:9.7px">r…</span></div>
<div class="fb" style="left:2027px;top:862px;width:50.69999999999982px;height:38px;background:#f9e7f3;"><span style="position:absolute;left:8px;top:9.7px">s…</span></div>
<div class="fb" style="left:2027px;top:902px;width:50.69999999999982px;height:38px;background:#f5c2dc;"><span style="position:absolute;left:8px;top:9.7px">_…</span></div>
<div class="fb" style="left:2027px;top:942px;width:50.69999999999982px;height:38px;background:#efb6e6;"><span style="position:absolute;left:8px;top:9.7px">_…</span></div>
<div class="fb" style="left:2027px;top:982px;width:50.69999999999982px;height:38px;background:#fae6e6;"><span style="position:absolute;left:8px;top:9.7px">C…</span></div>
<div class="fb" style="left:2027px;top:1022px;width:50.69999999999982px;height:38px;background:#f6d3e3;"><span style="position:absolute;left:8px;top:9.7px">C…</span></div>
<div class="fb" style="left:2027px;top:1062px;width:50.69999999999982px;height:38px;background:#f6c0cc;"><span style="position:absolute;left:8px;top:9.7px">C…</span></div>
<div class="fb" style="left:2027px;top:1102px;width:50.69999999999982px;height:38px;background:#f5c6d4;"><span style="position:absolute;left:8px;top:9.7px">C…</span></div>
<div class="fb" style="left:2027px;top:1142px;width:50.69999999999982px;height:38px;background:#efb8ea;"><span style="position:absolute;left:8px;top:9.7px">C…</span></div>
<div class="fb" style="left:2027px;top:1182px;width:50.69999999999982px;height:24px;background:#fbe8ee;"><span style="position:absolute;left:8px;top:9.7px">-</span></div>
<div class="fb" style="left:2184px;top:702px;width:50px;height:38px;background:#f6c5c6;"><span style="position:absolute;left:8px;top:9.7px">_…</span></div>
<div class="fb" style="left:2184px;top:742px;width:50px;height:38px;background:#f5cddc;"><span style="position:absolute;left:8px;top:9.7px">_…</span></div>
<div class="fb" style="left:2184px;top:782px;width:50px;height:38px;background:#f3d0ee;"><span style="position:absolute;left:8px;top:9.7px">_…</span></div>
<div class="fb" style="left:2184px;top:822px;width:50px;height:38px;background:#f3cbe6;"><span style="position:absolute;left:8px;top:9.7px">r…</span></div>
<div class="fb" style="left:2184px;top:862px;width:50px;height:38px;background:#f9e7f3;"><span style="position:absolute;left:8px;top:9.7px">s…</span></div>
<div class="fb" style="left:2184px;top:902px;width:50px;height:38px;background:#f5c2dc;"><span style="position:absolute;left:8px;top:9.7px">_…</span></div>
<div class="fb" style="left:2184px;top:942px;width:50px;height:38px;background:#efb6e6;"><span style="position:absolute;left:8px;top:9.7px">_…</span></div>
<div class="fb" style="left:2184px;top:982px;width:50px;height:38px;background:#fae6e6;"><span style="position:absolute;left:8px;top:9.7px">C…</span></div>
<div class="fb" style="left:2184px;top:1022px;width:50px;height:38px;background:#f6d3e3;"><span style="position:absolute;left:8px;top:9.7px">C…</span></div>
<div class="fb" style="left:2184px;top:1062px;width:50px;height:38px;background:#f6c0cc;"><span style="position:absolute;left:8px;top:9.7px">C…</span></div>
<div class="fb" style="left:2184px;top:1102px;width:50px;height:38px;background:#f5c6d4;"><span style="position:absolute;left:8px;top:9.7px">C…</span></div>
<div class="fb" style="left:2184px;top:1142px;width:50px;height:38px;background:#efb8ea;"><span style="position:absolute;left:8px;top:9.7px">C…</span></div>
<div class="fb" style="left:2184px;top:1182px;width:50px;height:24px;background:#fbe8ee;"><span style="position:absolute;left:8px;top:9.7px">-</span></div>
<div class="fb" style="left:2966px;top:702px;width:50.30000000000018px;height:38px;background:#f6c5c6;"><span style="position:absolute;left:8px;top:9.7px">_…</span></div>
<div class="fb" style="left:2966px;top:742px;width:50.30000000000018px;height:38px;background:#f5cddc;"><span style="position:absolute;left:8px;top:9.7px">_…</span></div>
<div class="fb" style="left:2966px;top:782px;width:50.30000000000018px;height:38px;background:#f3d0ee;"><span style="position:absolute;left:8px;top:9.7px">_…</span></div>
<div class="fb" style="left:2966px;top:822px;width:50.30000000000018px;height:38px;background:#f3cbe6;"><span style="position:absolute;left:8px;top:9.7px">r…</span></div>
<div class="fb" style="left:2966px;top:862px;width:50.30000000000018px;height:38px;background:#f9e7f3;"><span style="position:absolute;left:8px;top:9.7px">s…</span></div>
<div class="fb" style="left:2966px;top:902px;width:50.30000000000018px;height:38px;background:#f5c2dc;"><span style="position:absolute;left:8px;top:9.7px">_…</span></div>
<div class="fb" style="left:2966px;top:942px;width:50.30000000000018px;height:38px;background:#efb6e6;"><span style="position:absolute;left:8px;top:9.7px">_…</span></div>
<div class="fb" style="left:2966px;top:982px;width:50.30000000000018px;height:38px;background:#fae6e6;"><span style="position:absolute;left:8px;top:9.7px">C…</span></div>
<div class="fb" style="left:2966px;top:1022px;width:50.30000000000018px;height:38px;background:#f6d3e3;"><span style="position:absolute;left:8px;top:9.7px">C…</span></div>
<div class="fb" style="left:2966px;top:1062px;width:50.30000000000018px;height:38px;background:#f6c0cc;"><span style="position:absolute;left:8px;top:9.7px">C…</span></div>
<div class="fb" style="left:2966px;top:1102px;width:50.30000000000018px;height:38px;background:#f5c6d4;"><span style="position:absolute;left:8px;top:9.7px">C…</span></div>
<div class="fb" style="left:2966px;top:1142px;width:50.30000000000018px;height:38px;background:#efb8ea;"><span style="position:absolute;left:8px;top:9.7px">C…</span></div>
<div class="fb" style="left:2966px;top:1182px;width:50.30000000000018px;height:24px;background:#fbe8ee;"><span style="position:absolute;left:8px;top:9.7px">-</span></div>
<div class="fb" style="left:2080.3px;top:702px;width:49.69999999999982px;height:38px;background:#f9e6f3;"><span style="position:absolute;left:8px;top:9.7px">_…</span></div>
<div class="fb" style="left:2080.3px;top:742px;width:49.69999999999982px;height:38px;background:#f8e0f0;"><span style="position:absolute;left:8px;top:9.7px">_…</span></div>
<div class="fb" style="left:2080.3px;top:782px;width:49.69999999999982px;height:38px;background:#f4c4da;"><span style="position:absolute;left:8px;top:9.7px">_…</span></div>
<div class="fb" style="left:2080.3px;top:822px;width:49.69999999999982px;height:38px;background:#f4d4ea;"><span style="position:absolute;left:8px;top:9.7px">_…</span></div>
<div class="fb" style="left:2080.3px;top:862px;width:49.69999999999982px;height:38px;background:#f5bed2;"><span style="position:absolute;left:8px;top:9.7px">_…</span></div>
<div class="fb" style="left:2080.3px;top:902px;width:49.69999999999982px;height:38px;background:#f5c8dc;"><span style="position:absolute;left:8px;top:9.7px">_…</span></div>
<div class="fb" style="left:2080.3px;top:942px;width:49.69999999999982px;height:38px;background:#f6bcc4;"><span style="position:absolute;left:8px;top:9.7px">-…</span></div>
<div class="fb" style="left:2080.3px;top:982px;width:49.69999999999982px;height:38px;background:#f5d4ea;"><span style="position:absolute;left:8px;top:9.7px">-…</span></div>
<div class="fb" style="left:2080.3px;top:1022px;width:49.69999999999982px;height:38px;background:#f9e6e8;"><span style="position:absolute;left:8px;top:9.7px">_…</span></div>
<div class="fb" style="left:2080.3px;top:1062px;width:49.69999999999982px;height:38px;background:#f5d4ea;"><span style="position:absolute;left:8px;top:9.7px">-…</span></div>
<div class="fb" style="left:2080.3px;top:1102px;width:49.69999999999982px;height:38px;background:#f2c8e4;"><span style="position:absolute;left:8px;top:9.7px">-…</span></div>
<div class="fb" style="left:2080.3px;top:1142px;width:49.69999999999982px;height:38px;background:#f9e0e4;"><span style="position:absolute;left:8px;top:9.7px">-…</span></div>
<div class="fb" style="left:2080.3px;top:1182px;width:49.69999999999982px;height:24px;background:#f2d0f0;"><span style="position:absolute;left:8px;top:9.7px">-</span></div>
<div class="fb" style="left:2757px;top:702px;width:49.80000000000018px;height:38px;background:#f9e6f3;"><span style="position:absolute;left:8px;top:9.7px">_…</span></div>
<div class="fb" style="left:2757px;top:742px;width:49.80000000000018px;height:38px;background:#f8e0f0;"><span style="position:absolute;left:8px;top:9.7px">_…</span></div>
<div class="fb" style="left:2757px;top:782px;width:49.80000000000018px;height:38px;background:#f4c4da;"><span style="position:absolute;left:8px;top:9.7px">_…</span></div>
<div class="fb" style="left:2757px;top:822px;width:49.80000000000018px;height:38px;background:#f4d4ea;"><span style="position:absolute;left:8px;top:9.7px">_…</span></div>
<div class="fb" style="left:2757px;top:862px;width:49.80000000000018px;height:38px;background:#f5bed2;"><span style="position:absolute;left:8px;top:9.7px">_…</span></div>
<div class="fb" style="left:2757px;top:902px;width:49.80000000000018px;height:38px;background:#f5c8dc;"><span style="position:absolute;left:8px;top:9.7px">_…</span></div>
<div class="fb" style="left:2757px;top:942px;width:49.80000000000018px;height:38px;background:#f6bcc4;"><span style="position:absolute;left:8px;top:9.7px">-…</span></div>
<div class="fb" style="left:2757px;top:982px;width:49.80000000000018px;height:38px;background:#f5d4ea;"><span style="position:absolute;left:8px;top:9.7px">-…</span></div>
<div class="fb" style="left:2757px;top:1022px;width:49.80000000000018px;height:38px;background:#f9e6e8;"><span style="position:absolute;left:8px;top:9.7px">_…</span></div>
<div class="fb" style="left:2757px;top:1062px;width:49.80000000000018px;height:38px;background:#f5d4ea;"><span style="position:absolute;left:8px;top:9.7px">-…</span></div>
<div class="fb" style="left:2757px;top:1102px;width:49.80000000000018px;height:38px;background:#f2c8e4;"><span style="position:absolute;left:8px;top:9.7px">-…</span></div>
<div class="fb" style="left:2757px;top:1142px;width:49.80000000000018px;height:38px;background:#f9e0e4;"><span style="position:absolute;left:8px;top:9.7px">-…</span></div>
<div class="fb" style="left:2757px;top:1182px;width:49.80000000000018px;height:24px;background:#f2d0f0;"><span style="position:absolute;left:8px;top:9.7px">-</span></div>
<div class="fb" style="left:3018px;top:702px;width:4px;height:38px;background:#f9e6f3;"></div>
<div class="fb" style="left:3018px;top:742px;width:4px;height:38px;background:#f8e0f0;"></div>
<div class="fb" style="left:3018px;top:782px;width:4px;height:38px;background:#f4c4da;"></div>
<div class="fb" style="left:3018px;top:822px;width:4px;height:38px;background:#f4d4ea;"></div>
<div class="fb" style="left:3018px;top:862px;width:4px;height:38px;background:#f5bed2;"></div>
<div class="fb" style="left:3018px;top:902px;width:4px;height:38px;background:#f5c8dc;"></div>
<div class="fb" style="left:3018px;top:942px;width:4px;height:38px;background:#f6bcc4;"></div>
<div class="fb" style="left:3018px;top:982px;width:4px;height:38px;background:#f5d4ea;"></div>
<div class="fb" style="left:3018px;top:1022px;width:4px;height:38px;background:#f9e6e8;"></div>
<div class="fb" style="left:3018px;top:1062px;width:4px;height:38px;background:#f5d4ea;"></div>
<div class="fb" style="left:3018px;top:1102px;width:4px;height:38px;background:#f2c8e4;"></div>
<div class="fb" style="left:3018px;top:1142px;width:4px;height:38px;background:#f9e0e4;"></div>
<div class="fb" style="left:3018px;top:1182px;width:4px;height:24px;background:#f2d0f0;"></div>
<div class="fb" style="left:2236px;top:702px;width:314px;height:38px;background:#f9e4f3;"><span style="position:absolute;left:8px;top:9.7px">__CFRUNLOOP…CH_QUEUE__</span></div>
<div class="fb" style="left:2236px;top:742px;width:314px;height:38px;background:#f7def0;"><span style="position:absolute;left:8px;top:9.7px">_dispatch_m…llback_4CF</span></div>
<div class="fb" style="left:2236px;top:782px;width:314px;height:38px;background:#f5c4dc;"><span style="position:absolute;left:8px;top:9.7px">_dispatch_m…ueue_drain</span></div>
<div class="fb" style="left:2236px;top:822px;width:314px;height:38px;background:#f5d2ea;"><span style="position:absolute;left:8px;top:9.7px">_dispatch_c…nt_callout</span></div>
<div class="fb" style="left:2236px;top:862px;width:314px;height:38px;background:#f4bcd2;"><span style="position:absolute;left:8px;top:9.7px">_dispatch_c…nd_release</span></div>
<div class="fb" style="left:2236px;top:902px;width:314px;height:38px;background:#f6c6dc;"><span style="position:absolute;left:8px;top:9.7px">___UIUpdate…ock_invoke</span></div>
<div class="fb" style="left:2236px;top:942px;width:314px;height:38px;background:#f6bac2;"><span style="position:absolute;left:8px;top:9.7px">-[UITableVi…dleUntil:]</span></div>
<div class="fb" style="left:2236px;top:982px;width:314px;height:38px;background:#f5d6ec;"><span style="position:absolute;left:8px;top:9.7px">-[_UITableV…ntOffset:]</span></div>
<div class="fb" style="left:2236px;top:1022px;width:314px;height:38px;background:#f9e4e6;"><span style="position:absolute;left:8px;top:9.7px">__48-[UITab…ock_invoke</span></div>
<div class="fb" style="left:2236px;top:1062px;width:314px;height:38px;background:#f5d4ea;"><span style="position:absolute;left:8px;top:9.7px">-[UITableVi…bleRange:]</span></div>
<div class="fb" style="left:2236px;top:1102px;width:314px;height:38px;background:#f3c6e4;"><span style="position:absolute;left:8px;top:9.7px">-[UITableVi…eGuessed:]</span></div>
<div class="fb" style="left:2236px;top:1142px;width:314px;height:38px;background:#f9dfe4;"><span style="position:absolute;left:8px;top:9.7px">-[UITableVi…eGuessed:]</span></div>
<div class="fb" style="left:2236px;top:1182px;width:314px;height:24px;background:#f2d0f0;"><span style="position:absolute;left:8px;top:9.7px">-[UITableVi…deredRow:]</span></div>
<div class="fb" style="left:2705px;top:702px;width:49.5px;height:38px;background:#f5c8d8;"><span style="position:absolute;left:8px;top:9.7px">_…</span></div>
<div class="fb" style="left:2705px;top:742px;width:49.5px;height:38px;background:#f2c4ec;"><span style="position:absolute;left:8px;top:9.7px">_…</span></div>
<div class="fb" style="left:2705px;top:782px;width:49.5px;height:38px;background:#f5cfe0;"><span style="position:absolute;left:8px;top:9.7px">o…</span></div>
<div class="b" style="left:376.2px;top:545px;width:2.0px;height:661px;background:rgba(232,228,236,0.85);"></div>
<div class="b" style="left:614.4px;top:545px;width:2.0px;height:661px;background:rgba(232,228,236,0.85);"></div>
<div class="b" style="left:852.5999999999999px;top:545px;width:2.0px;height:661px;background:rgba(232,228,236,0.85);"></div>
<div class="b" style="left:1090.8px;top:545px;width:2.0px;height:661px;background:rgba(232,228,236,0.85);"></div>
<div class="b" style="left:1329.0px;top:545px;width:2.0px;height:661px;background:rgba(232,228,236,0.85);"></div>
<div class="b" style="left:1567.2px;top:545px;width:2.0px;height:661px;background:rgba(232,228,236,0.85);"></div>
<div class="b" style="left:1805.3999999999999px;top:545px;width:2.0px;height:661px;background:rgba(232,228,236,0.85);"></div>
<div class="b" style="left:2043.6px;top:545px;width:2.0px;height:661px;background:rgba(232,228,236,0.85);"></div>
<div class="b" style="left:2281.7999999999997px;top:545px;width:2.0px;height:661px;background:rgba(232,228,236,0.85);"></div>
<div class="b" style="left:2519.9999999999995px;top:545px;width:2.0px;height:661px;background:rgba(232,228,236,0.85);"></div>
<div class="b" style="left:2758.2px;top:545px;width:2.0px;height:661px;background:rgba(232,228,236,0.85);"></div>
<div class="b" style="left:2996.3999999999996px;top:545px;width:2.0px;height:661px;background:rgba(232,228,236,0.85);"></div>
</div></div>
<div class="b" style="left:140px;top:1206px;width:2882px;height:454px;background:#fff;"></div>
<div class="b" style="left:140px;top:1206px;width:2882px;height:60px;background:#faf9fb;"></div>
<div class="b" style="left:140px;top:1205.5px;width:2882px;height:2.0px;background:#dad6dc;"></div>
<div class="t" style="left:159px;top:1221.4px;font-size:25px;color:#3e3446;font-weight:400;transform:scaleX(1.0034);transform-origin:0 50%;">Bottom Up</div>
<div class="t" style="left:297px;top:1223.0px;font-size:23.2px;color:#3e3446;font-weight:700;transform:scaleX(0.9956);transform-origin:0 50%;">Call Order</div>
<div class="t" style="left:442.8px;top:1222.7px;font-size:23.5px;color:#3e3446;font-weight:700;transform:scaleX(0.9979);transform-origin:0 50%;">All Frames</div>
<div class="t" style="left:585px;top:1221.4px;font-size:25px;color:#3e3446;font-weight:400;transform:scaleX(1.0000);transform-origin:0 50%;">Application Frames</div>
<div class="t" style="left:821px;top:1221.4px;font-size:25px;color:#3e3446;font-weight:400;">System Frames</div>
<div class="b" style="left:1031px;top:1225px;width:26px;height:25px;border:2px solid #80708f;border-radius:5px;background:#fff;"></div>
<div class="t" style="left:1066px;top:1221.6px;font-size:24.75px;color:#3e3446;font-weight:400;transform:scaleX(1.0000);transform-origin:0 50%;">Collapse recursion</div>
<div class="b" style="left:296px;top:1262px;width:114px;height:4px;background:#6c5fc7;border-radius:2px 2px 0 0;"></div>
<div class="b" style="left:442px;top:1262px;width:122px;height:4px;background:#6c5fc7;border-radius:2px 2px 0 0;"></div>
<svg style="left:2822px;top:1223px" width="26" height="25" viewBox="0 0 26 25"><g fill="none" stroke="#9e9aa3" stroke-width="2.2"><path d="M2 12.5 L2 23.5 L24 23.5 L24 12.5"/><path d="M13 1 L13 17"/><path d="M7 11 L13 17 L19 11"/></g></svg>
<svg style="left:2888px;top:1223px" width="25" height="25" viewBox="0 0 25 25"><g fill="none" stroke="#9e9aa3" stroke-width="2.2"><rect x="1.2" y="1.2" width="22.6" height="22.6" rx="4.5"/><path d="M15.2 1.2 L15.2 23.8"/></g></svg>
<svg style="left:2928px;top:1223px" width="25" height="25" viewBox="0 0 25 25"><g fill="none" stroke="#6e6874" stroke-width="2.2"><rect x="1.2" y="1.2" width="22.6" height="22.6" rx="4.5"/><path d="M1.2 16 L23.8 16"/></g></svg>
<svg style="left:2968px;top:1223px" width="25" height="25" viewBox="0 0 25 25"><g fill="none" stroke="#9e9aa3" stroke-width="2.2"><rect x="1.2" y="1.2" width="22.6" height="22.6" rx="4.5"/><path d="M7.8 1.2 L7.8 23.8"/></g></svg>
<div class="b" style="left:140px;top:1266px;width:2882px;height:2px;background:#dad6dc;"></div>
<div class="b" style="left:140px;top:1268px;width:2365px;height:49px;background:#faf9fb;"></div>
<div class="b" style="left:140px;top:1317px;width:2365px;height:2px;background:#dad6dc;"></div>
<div class="b" style="left:466px;top:1268px;width:2px;height:392px;background:#dad6dc;"></div>
<div class="b" style="left:794px;top:1268px;width:2px;height:392px;background:#dad6dc;"></div>
<div class="t" style="left:156.8px;top:1277.4px;font-size:24.4px;color:#3e3446;font-weight:400;transform:scaleX(0.9951);transform-origin:0 50%;">Self Time</div>
<div class="t" style="left:484.7px;top:1277.4px;font-size:24.4px;color:#3e3446;font-weight:400;transform:scaleX(1.0049);transform-origin:0 50%;">Total Time</div>
<div class="t" style="left:812px;top:1277.4px;font-size:24.4px;color:#3e3446;font-weight:400;">Frame</div>
<svg style="left:758px;top:1281px" width="20" height="22" viewBox="0 0 20 22"><g fill="none" stroke="#3a3241" stroke-width="2.2"><path d="M10 1 L10 20"/><path d="M2 12 L10 20 L18 12"/></g></svg>
<div class="b" style="left:468px;top:1319px;width:273.5px;height:45px;background:#fdf8ee;"></div>
<div class="b" style="left:468px;top:1364px;width:273.5px;height:2px;background:#f5c26b;"></div>
<div class="t" style="right:2679.5px;top:1328.4px;font-size:25px;color:#3a3241;font-weight:400;transform:scaleX(1.0093);transform-origin:100% 50%;">0.00ns</div>
<div class="t" style="right:2573px;top:1328.4px;font-size:25px;color:#80708f;font-weight:400;transform:scaleX(0.9053);transform-origin:100% 50%;">0.0%</div>
<div class="t" style="right:2388px;top:1328.4px;font-size:25px;color:#3a3241;font-weight:400;transform:scaleX(0.7902);transform-origin:100% 50%;">7.17s</div>
<div class="t" style="right:2289px;top:1328.4px;font-size:25px;color:#80708f;font-weight:400;transform:scaleX(0.9204);transform-origin:100% 50%;">100.0%</div>
<svg style="left:755px;top:1330px" width="26" height="25" viewBox="0 0 26 25"><g fill="none" stroke="#80708f" stroke-width="2.2"><circle cx="13" cy="7" r="5.5"/><path d="M1.5 23.5 L24.5 23.5 L24.5 19 C24.5 14 20 12.5 16 12.5 L10 12.5 C6 12.5 1.5 14 1.5 19 Z"/></g></svg>
<div class="b" style="left:812px;top:1330.5px;width:24px;height:23.0px;background:#f2c4ec;border-radius:3px;"></div>
<svg style="left:848px;top:1337px" width="13" height="9" viewBox="0 0 13 9"><path d="M1.5 1.5 L6.5 7 L11.5 1.5" fill="none" stroke="#3a3241" stroke-width="2.2"/></svg>
<div class="t" style="left:873px;top:1328.4px;font-size:25px;color:#3a3241;font-weight:400;">main</div>
<div class="b" style="left:468px;top:1367px;width:273.5px;height:45px;background:#fdf8ee;"></div>
<div class="b" style="left:468px;top:1412px;width:273.5px;height:2px;background:#f5c26b;"></div>
<div class="t" style="right:2679.5px;top:1376.4px;font-size:25px;color:#3a3241;font-weight:400;transform:scaleX(1.0093);transform-origin:100% 50%;">0.00ns</div>
<div class="t" style="right:2573px;top:1376.4px;font-size:25px;color:#80708f;font-weight:400;transform:scaleX(0.9053);transform-origin:100% 50%;">0.0%</div>
<div class="t" style="right:2388px;top:1376.4px;font-size:25px;color:#3a3241;font-weight:400;transform:scaleX(0.7902);transform-origin:100% 50%;">7.17s</div>
<div class="t" style="right:2289px;top:1376.4px;font-size:25px;color:#80708f;font-weight:400;transform:scaleX(0.9204);transform-origin:100% 50%;">100.0%</div>
<svg style="left:755px;top:1378px" width="26" height="25" viewBox="0 0 26 25"><g fill="none" stroke="#80708f" stroke-width="2.2"><circle cx="13" cy="7" r="5.5"/><path d="M1.5 23.5 L24.5 23.5 L24.5 19 C24.5 14 20 12.5 16 12.5 L10 12.5 C6 12.5 1.5 14 1.5 19 Z"/></g></svg>
<div class="b" style="left:840px;top:1378.5px;width:24px;height:23.0px;background:#f6c2cc;border-radius:3px;"></div>
<svg style="left:876px;top:1385px" width="13" height="9" viewBox="0 0 13 9"><path d="M1.5 1.5 L6.5 7 L11.5 1.5" fill="none" stroke="#3a3241" stroke-width="2.2"/></svg>
<div class="t" style="left:901px;top:1376.4px;font-size:25px;color:#3a3241;font-weight:400;">static AppDelegate.$main()</div>
<div class="b" style="left:468px;top:1415px;width:273.5px;height:45px;background:#fdf8ee;"></div>
<div class="b" style="left:468px;top:1460px;width:273.5px;height:2px;background:#f5c26b;"></div>
<div class="t" style="right:2679.5px;top:1424.4px;font-size:25px;color:#3a3241;font-weight:400;transform:scaleX(1.0093);transform-origin:100% 50%;">0.00ns</div>
<div class="t" style="right:2573px;top:1424.4px;font-size:25px;color:#80708f;font-weight:400;transform:scaleX(0.9053);transform-origin:100% 50%;">0.0%</div>
<div class="t" style="right:2388px;top:1424.4px;font-size:25px;color:#3a3241;font-weight:400;transform:scaleX(0.7902);transform-origin:100% 50%;">7.17s</div>
<div class="t" style="right:2289px;top:1424.4px;font-size:25px;color:#80708f;font-weight:400;transform:scaleX(0.9204);transform-origin:100% 50%;">100.0%</div>
<svg style="left:755px;top:1426px" width="26" height="25" viewBox="0 0 26 25"><g fill="none" stroke="#80708f" stroke-width="2.2"><circle cx="13" cy="7" r="5.5"/><path d="M1.5 23.5 L24.5 23.5 L24.5 19 C24.5 14 20 12.5 16 12.5 L10 12.5 C6 12.5 1.5 14 1.5 19 Z"/></g></svg>
<div class="b" style="left:868px;top:1426.5px;width:24px;height:23.0px;background:#f6c2cc;border-radius:3px;"></div>
<svg style="left:904px;top:1433px" width="13" height="9" viewBox="0 0 13 9"><path d="M1.5 1.5 L6.5 7 L11.5 1.5" fill="none" stroke="#3a3241" stroke-width="2.2"/></svg>
<div class="t" style="left:929px;top:1424.4px;font-size:25px;color:#3a3241;font-weight:400;">static UIApplicationDelegate.main()</div>
<div class="b" style="left:468px;top:1463px;width:273.5px;height:45px;background:#fdf8ee;"></div>
<div class="b" style="left:468px;top:1508px;width:273.5px;height:2px;background:#f5c26b;"></div>
<div class="t" style="right:2679.5px;top:1472.4px;font-size:25px;color:#3a3241;font-weight:400;transform:scaleX(1.0093);transform-origin:100% 50%;">0.00ns</div>
<div class="t" style="right:2573px;top:1472.4px;font-size:25px;color:#80708f;font-weight:400;transform:scaleX(0.9053);transform-origin:100% 50%;">0.0%</div>
<div class="t" style="right:2388px;top:1472.4px;font-size:25px;color:#3a3241;font-weight:400;transform:scaleX(0.7902);transform-origin:100% 50%;">7.17s</div>
<div class="t" style="right:2289px;top:1472.4px;font-size:25px;color:#80708f;font-weight:400;transform:scaleX(0.9204);transform-origin:100% 50%;">100.0%</div>
<svg style="left:755px;top:1474px" width="26" height="25" viewBox="0 0 26 25"><g fill="none" stroke="#80708f" stroke-width="2.2" stroke-linejoin="round"><circle cx="13" cy="12.5" r="4"/><path d="M11 1.5 L15 1.5 L16 5 L19 6.5 L22 4.5 L24.5 7.5 L22.5 10.5 L23.5 13.5 L24.5 14 L24 17 L21 18 L20 21 L17.5 23.5 L15 21.5 L11 21.5 L9 23.5 L6 21 L5 18 L2 17 L1.5 14 L4 13 L3.5 10 L1.5 7.5 L4 4.5 L7 6.5 L10 5 Z"/></g></svg>
<div class="b" style="left:896px;top:1474.5px;width:24px;height:23.0px;background:#f2c4e6;border-radius:3px;"></div>
<svg style="left:932px;top:1481px" width="13" height="9" viewBox="0 0 13 9"><path d="M1.5 1.5 L6.5 7 L11.5 1.5" fill="none" stroke="#3a3241" stroke-width="2.2"/></svg>
<div class="t" style="left:957px;top:1472.4px;font-size:25px;color:#3a3241;font-weight:400;">UIApplicationMain(Int32, UnsafeMutablePointer&lt;UnsafeMutablePointer&lt;Int8&gt;&gt;?, String?, String?)</div>
<div class="b" style="left:468px;top:1511px;width:273.5px;height:45px;background:#fdf8ee;"></div>
<div class="b" style="left:468px;top:1556px;width:273.5px;height:2px;background:#f5c26b;"></div>
<div class="t" style="right:2679.5px;top:1520.4px;font-size:25px;color:#3a3241;font-weight:400;transform:scaleX(1.0093);transform-origin:100% 50%;">0.00ns</div>
<div class="t" style="right:2573px;top:1520.4px;font-size:25px;color:#80708f;font-weight:400;transform:scaleX(0.9053);transform-origin:100% 50%;">0.0%</div>
<div class="t" style="right:2388px;top:1520.4px;font-size:25px;color:#3a3241;font-weight:400;transform:scaleX(0.7902);transform-origin:100% 50%;">7.17s</div>
<div class="t" style="right:2289px;top:1520.4px;font-size:25px;color:#80708f;font-weight:400;transform:scaleX(0.9204);transform-origin:100% 50%;">100.0%</div>
<svg style="left:755px;top:1522px" width="26" height="25" viewBox="0 0 26 25"><g fill="none" stroke="#80708f" stroke-width="2.2" stroke-linejoin="round"><circle cx="13" cy="12.5" r="4"/><path d="M11 1.5 L15 1.5 L16 5 L19 6.5 L22 4.5 L24.5 7.5 L22.5 10.5 L23.5 13.5 L24.5 14 L24 17 L21 18 L20 21 L17.5 23.5 L15 21.5 L11 21.5 L9 23.5 L6 21 L5 18 L2 17 L1.5 14 L4 13 L3.5 10 L1.5 7.5 L4 4.5 L7 6.5 L10 5 Z"/></g></svg>
<div class="b" style="left:924px;top:1522.5px;width:24px;height:23.0px;background:#f5d0ec;border-radius:3px;"></div>
<svg style="left:960px;top:1529px" width="13" height="9" viewBox="0 0 13 9"><path d="M1.5 1.5 L6.5 7 L11.5 1.5" fill="none" stroke="#3a3241" stroke-width="2.2"/></svg>
<div class="t" style="left:985px;top:1520.4px;font-size:25px;color:#3a3241;font-weight:400;">UIApplicationMain</div>
<div class="b" style="left:468px;top:1559px;width:273.5px;height:45px;background:#fdf8ee;"></div>
<div class="b" style="left:468px;top:1604px;width:273.5px;height:2px;background:#f5c26b;"></div>
<div class="t" style="right:2679.5px;top:1568.4px;font-size:25px;color:#3a3241;font-weight:400;transform:scaleX(1.0093);transform-origin:100% 50%;">0.00ns</div>
<div class="t" style="right:2573px;top:1568.4px;font-size:25px;color:#80708f;font-weight:400;transform:scaleX(0.9053);transform-origin:100% 50%;">0.0%</div>
<div class="t" style="right:2388px;top:1568.4px;font-size:25px;color:#3a3241;font-weight:400;transform:scaleX(0.7902);transform-origin:100% 50%;">7.17s</div>
<div class="t" style="right:2289px;top:1568.4px;font-size:25px;color:#80708f;font-weight:400;transform:scaleX(0.9204);transform-origin:100% 50%;">100.0%</div>
<svg style="left:755px;top:1570px" width="26" height="25" viewBox="0 0 26 25"><g fill="none" stroke="#80708f" stroke-width="2.2" stroke-linejoin="round"><circle cx="13" cy="12.5" r="4"/><path d="M11 1.5 L15 1.5 L16 5 L19 6.5 L22 4.5 L24.5 7.5 L22.5 10.5 L23.5 13.5 L24.5 14 L24 17 L21 18 L20 21 L17.5 23.5 L15 21.5 L11 21.5 L9 23.5 L6 21 L5 18 L2 17 L1.5 14 L4 13 L3.5 10 L1.5 7.5 L4 4.5 L7 6.5 L10 5 Z"/></g></svg>
<div class="b" style="left:952px;top:1570.5px;width:24px;height:23.0px;background:#f8dae4;border-radius:3px;"></div>
<svg style="left:988px;top:1577px" width="13" height="9" viewBox="0 0 13 9"><path d="M1.5 1.5 L6.5 7 L11.5 1.5" fill="none" stroke="#3a3241" stroke-width="2.2"/></svg>
<div class="t" style="left:1013px;top:1568.4px;font-size:25px;color:#3a3241;font-weight:400;">-[UIApplication _run]</div>
<div class="b" style="left:468px;top:1607px;width:273.5px;height:45px;background:#fdf8ee;"></div>
<div class="b" style="left:468px;top:1652px;width:273.5px;height:2px;background:#f5c26b;"></div>
<div class="t" style="right:2679.5px;top:1616.4px;font-size:25px;color:#3a3241;font-weight:400;transform:scaleX(1.0093);transform-origin:100% 50%;">0.00ns</div>
<div class="t" style="right:2573px;top:1616.4px;font-size:25px;color:#80708f;font-weight:400;transform:scaleX(0.9053);transform-origin:100% 50%;">0.0%</div>
<div class="t" style="right:2388px;top:1616.4px;font-size:25px;color:#3a3241;font-weight:400;transform:scaleX(0.7902);transform-origin:100% 50%;">7.17s</div>
<div class="t" style="right:2289px;top:1616.4px;font-size:25px;color:#80708f;font-weight:400;transform:scaleX(0.9204);transform-origin:100% 50%;">100.0%</div>
<svg style="left:755px;top:1618px" width="26" height="25" viewBox="0 0 26 25"><g fill="none" stroke="#80708f" stroke-width="2.2" stroke-linejoin="round"><circle cx="13" cy="12.5" r="4"/><path d="M11 1.5 L15 1.5 L16 5 L19 6.5 L22 4.5 L24.5 7.5 L22.5 10.5 L23.5 13.5 L24.5 14 L24 17 L21 18 L20 21 L17.5 23.5 L15 21.5 L11 21.5 L9 23.5 L6 21 L5 18 L2 17 L1.5 14 L4 13 L3.5 10 L1.5 7.5 L4 4.5 L7 6.5 L10 5 Z"/></g></svg>
<div class="b" style="left:980px;top:1618.5px;width:24px;height:23.0px;background:#f3b8dc;border-radius:3px;"></div>
<svg style="left:1016px;top:1625px" width="13" height="9" viewBox="0 0 13 9"><path d="M1.5 1.5 L6.5 7 L11.5 1.5" fill="none" stroke="#3a3241" stroke-width="2.2"/></svg>
<div class="t" style="left:1041px;top:1616.4px;font-size:25px;color:#3a3241;font-weight:400;">GSEventRunModal</div>
<div class="b" style="left:2504px;top:1268px;width:2px;height:392px;background:#dad6dc;"></div>
<div class="b" style="left:2506px;top:1268px;width:516px;height:49px;background:#faf9fb;"></div>
<div class="b" style="left:2506px;top:1317px;width:516px;height:2px;background:#dad6dc;"></div>
<div class="t" style="left:2522.3px;top:1279.1px;font-size:24.2px;color:#3a3241;font-weight:700;transform:scaleX(1.0000);transform-origin:0 50%;">Transaction</div>
<div class="t" style="left:2678px;top:1279.3px;font-size:24px;color:#3a3241;font-weight:400;transform:scaleX(1.0020);transform-origin:0 50%;">Device</div>
<div class="b" style="left:2522px;top:1312px;width:137px;height:4px;background:#6c5fc7;border-radius:2px 2px 0 0;"></div>
<div class="t" style="left:2522.5px;top:1332.1px;font-size:24.2px;color:#3a3241;font-weight:700;transform:scaleX(1.0097);transform-origin:0 50%;">transaction:</div>
<div class="t" style="left:2672px;top:1330.9px;font-size:25.5px;color:#3a3241;font-weight:400;transform:scaleX(1.0606);transform-origin:0 50%;">start</div>
<div class="t" style="left:2522.5px;top:1366.1px;font-size:24.2px;color:#3a3241;font-weight:700;transform:scaleX(0.9944);transform-origin:0 50%;">received at:</div>
<div class="t" style="left:2665.5px;top:1364.9px;font-size:25.5px;color:#3a3241;font-weight:400;transform:scaleX(0.8984);transform-origin:0 50%;">Sep 9, 11:38 PM</div>
<div class="t" style="left:2522.5px;top:1399.1px;font-size:24.2px;color:#3a3241;font-weight:700;transform:scaleX(0.9885);transform-origin:0 50%;">organization:</div>
<div class="t" style="left:2713.4px;top:1397.9px;font-size:25.5px;color:#3d74db;font-weight:400;transform:scaleX(0.9736);transform-origin:0 50%;">Specto</div>
<svg style="left:2683px;top:1403px" width="24" height="24" viewBox="0 0 24 24"><rect width="24" height="24" rx="5" fill="#2a2d3e"/><path d="M17 6.5 L10 6.5 C7.5 6.5 6.5 8.5 7 10.5 L9.5 10 C9.3 9.3 9.6 8.8 10.3 8.8 L14.8 8.8 Z M7 17.5 L14 17.5 C16.5 17.5 17.5 15.5 17 13.5 L14.5 14 C14.7 14.7 14.4 15.2 13.7 15.2 L9.2 15.2 Z" fill="#fff"/><path d="M7 13 L9 11.2 L17 11.2 L15 13 Z" fill="#4e64d8"/></svg>
<div class="t" style="left:2522.5px;top:1433.1px;font-size:24.2px;color:#3a3241;font-weight:700;transform:scaleX(1.0000);transform-origin:0 50%;">project:</div>
<div class="t" style="left:2652.8px;top:1431.9px;font-size:25.5px;color:#3d74db;font-weight:400;transform:scaleX(0.9971);transform-origin:0 50%;">ios-demo</div>
<svg style="left:2620px;top:1436px" width="24" height="24" viewBox="0 0 24 24"><rect width="24" height="24" rx="5.5" fill="#000"/><g transform="translate(1.2,0.8)"><path d="M16.2 12.7c0-2.3 1.9-3.4 2-3.5-1.1-1.6-2.8-1.8-3.4-1.8-1.4-.1-2.8.9-3.5.9s-1.8-.8-3-.8c-1.5 0-3 .9-3.8 2.3-1.6 2.8-.4 7 1.2 9.3.8 1.1 1.7 2.4 2.9 2.3 1.2 0 1.6-.7 3-.7s1.8.7 3 .7c1.3 0 2.1-1.1 2.8-2.3.9-1.3 1.3-2.6 1.3-2.6 0 0-2.5-1-2.5-3.8zM13.9 5.9c.6-.8 1.1-1.8 1-2.9-.9 0-2.1.6-2.7 1.4-.6.7-1.1 1.8-1 2.8 1 .1 2.1-.5 2.7-1.3z" fill="#fff"/></g></svg>
<div class="t" style="left:2522.5px;top:1471.1px;font-size:24.2px;color:#3a3241;font-weight:700;transform:scaleX(1.0086);transform-origin:0 50%;">platform:</div>
<div class="t" style="left:2668px;top:1469.9px;font-size:25.5px;color:#3a3241;font-weight:400;transform:scaleX(0.9632);transform-origin:0 50%;">cocoa</div>
<svg style="left:2637px;top:1475px" width="24" height="24" viewBox="0 0 24 24"><rect width="24" height="24" rx="5.5" fill="#000"/><g transform="translate(1.2,0.8)"><path d="M16.2 12.7c0-2.3 1.9-3.4 2-3.5-1.1-1.6-2.8-1.8-3.4-1.8-1.4-.1-2.8.9-3.5.9s-1.8-.8-3-.8c-1.5 0-3 .9-3.8 2.3-1.6 2.8-.4 7 1.2 9.3.8 1.1 1.7 2.4 2.9 2.3 1.2 0 1.6-.7 3-.7s1.8.7 3 .7c1.3 0 2.1-1.1 2.8-2.3.9-1.3 1.3-2.6 1.3-2.6 0 0-2.5-1-2.5-3.8zM13.9 5.9c.6-.8 1.1-1.8 1-2.9-.9 0-2.1.6-2.7 1.4-.6.7-1.1 1.8-1 2.8 1 .1 2.1-.5 2.7-1.3z" fill="#fff"/></g></svg>
<div class="t" style="left:2522.5px;top:1504.1px;font-size:24.2px;color:#3a3241;font-weight:700;transform:scaleX(1.0033);transform-origin:0 50%;">environment:</div>
<div class="t" style="left:2686px;top:1502.9px;font-size:25.5px;color:#3a3241;font-weight:400;transform:scaleX(1.0160);transform-origin:0 50%;">production</div>
<div class="t" style="left:2522.5px;top:1537.1px;font-size:24.2px;color:#3a3241;font-weight:700;transform:scaleX(0.9592);transform-origin:0 50%;">version:</div>
<div class="t" style="left:2621.8px;top:1535.9px;font-size:25.5px;color:#3a3241;font-weight:400;transform:scaleX(0.8447);transform-origin:0 50%;">1.0 (1)</div>
<div class="t" style="left:2522.5px;top:1571.1px;font-size:24.2px;color:#3a3241;font-weight:700;transform:scaleX(0.9905);transform-origin:0 50%;">duration:</div>
<div class="t" style="left:2635px;top:1569.9px;font-size:25.5px;color:#3a3241;font-weight:400;transform:scaleX(0.9280);transform-origin:0 50%;">7.68s</div>
<div class="t" style="left:2522.5px;top:1605.1px;font-size:24.2px;color:#3a3241;font-weight:700;transform:scaleX(0.9974);transform-origin:0 50%;">threads:</div>
<div class="t" style="left:2626px;top:1603.9px;font-size:25.5px;color:#3a3241;font-weight:400;transform:scaleX(0.8842);transform-origin:0 50%;">7</div>
</div><script>(function(){var w=window.innerWidth||3022;var s=w/3022;if(Math.abs(s-1)>0.002){document.getElementById("root").style.transform="scale("+s+")";}})();</script></body></html>
